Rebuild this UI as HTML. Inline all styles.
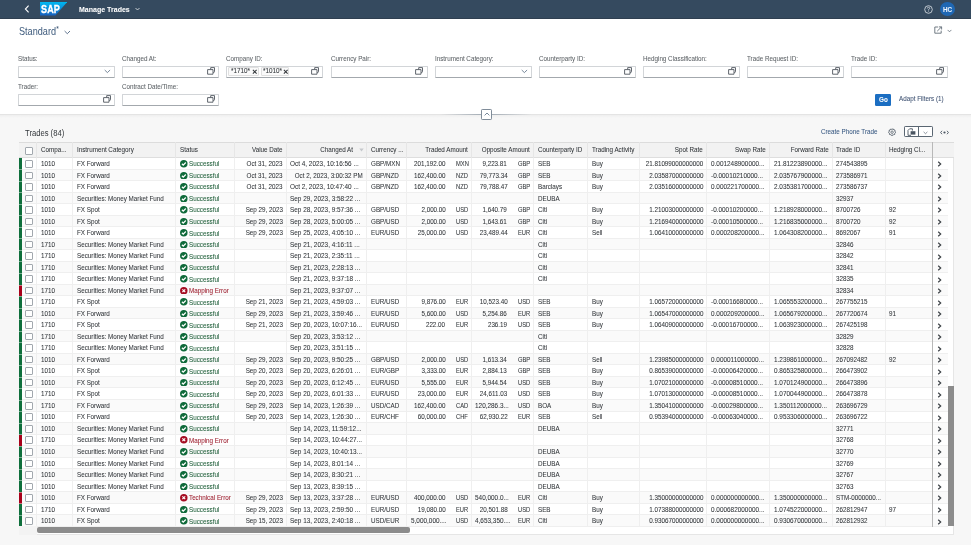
<!DOCTYPE html><html><head><meta charset="utf-8"><style>
*{box-sizing:border-box;margin:0;padding:0}
html,body{width:971px;height:545px;overflow:hidden}
body{position:relative;background:#f7f7f7;will-change:transform;font-family:"Liberation Sans",sans-serif;color:#32363a}
.a{position:absolute}
.t{position:absolute;white-space:nowrap;line-height:8px;color:#32363a;-webkit-text-stroke:0.06px currentColor}
.shell{left:0;top:0;width:971px;height:19px;background:#354a5f;border-bottom:1px solid #2f3f50}
.hdr{left:0;top:19px;width:971px;height:96.4px;background:#fff}
.lbl{color:#5f6468}
.inp{position:absolute;height:12.1px;width:97px;background:#fff;border:0.7px solid #d2d5d8;border-bottom:1px solid #a3a8ad;border-radius:1px}
.vh{position:absolute;width:7px;height:7px}
.cb{position:absolute;width:7.6px;height:7.6px;border:0.7px solid #a2a8ae;border-radius:1px;background:#fff}
.vline{position:absolute;width:0.6px;background:#e6e6e6}
.hline{position:absolute;height:0.6px;background:#e9e9e9}
.succ{color:#22603c}
.err{color:#9c1c2c}
</style></head><body>
<div class="a shell"></div>
<svg class="a" style="left:23px;top:4px" width="8" height="10" viewBox="0 0 8 10"><path d="M5.6 1.6 L2.4 5 L5.6 8.4" fill="none" stroke="#fff" stroke-width="1.1"/></svg>
<svg class="a" style="left:39.9px;top:2.2px" width="27.3" height="13.4" viewBox="0 0 27.3 13.4">
<defs><linearGradient id="g" x1="0" y1="0" x2="0" y2="1"><stop offset="0" stop-color="#00b8f1"/><stop offset="0.5" stop-color="#0a8fdc"/><stop offset="1" stop-color="#1761c0"/></linearGradient></defs>
<path d="M0 0 H27.3 L15.4 13.4 H0 Z" fill="url(#g)"/>
<text x="1.1" y="11.0" font-family="Liberation Sans" font-weight="bold" font-size="11.6" fill="#fff" stroke="#fff" stroke-width="0.35" textLength="18.6" lengthAdjust="spacingAndGlyphs">SAP</text>
</svg>
<span class="t " style="left:78.70px;top:5.86px;font-size:7.9px;transform:scaleX(0.89);transform-origin:0 0;font-weight:bold;color:#fff">Manage Trades</span>
<svg class="a" style="left:135.2px;top:7.0px" width="5" height="4" viewBox="0 0 5 4"><path d="M0.5 1 L2.5 3 L4.5 1" fill="none" stroke="#fff" stroke-width="0.7"/></svg>
<svg class="a" style="left:923.6px;top:4.6px" width="9" height="9" viewBox="0 0 9 9"><circle cx="4.5" cy="4.5" r="3.8" fill="none" stroke="#e8ecf0" stroke-width="0.75"/><path d="M3.3 3.5 Q3.3 2.3 4.5 2.3 Q5.7 2.3 5.7 3.4 Q5.7 4.1 4.5 4.6 V5.5" fill="none" stroke="#e8ecf0" stroke-width="0.7"/><circle cx="4.5" cy="6.6" r="0.45" fill="#e8ecf0"/></svg>
<div class="a" style="left:939.5px;top:1.9px;width:15.2px;height:14.2px;border-radius:50%;background:#1f67b3"></div>
<span class="t " style="left:942.70px;top:5.77px;font-size:7.0px;transform:scaleX(0.9);transform-origin:0 0;font-weight:bold;color:#eaf2fb">HC</span>
<div class="a hdr" style="height:95px"></div>
<span class="t " style="left:18.50px;top:28.07px;font-size:10.2px;-webkit-text-stroke:0;transform:scaleX(0.895);transform-origin:0 0;color:#3d5a7c">Standard</span>
<span class="t " style="left:56.30px;top:24.75px;font-size:6.5px;color:#3b5473">*</span>
<svg class="a" style="left:63.5px;top:30px" width="7" height="5" viewBox="0 0 7 5"><path d="M0.6 1 L3.3 3.7 L6 1" fill="none" stroke="#3b5473" stroke-width="0.8"/></svg>
<svg class="a" style="left:934px;top:25.5px" width="10" height="8" viewBox="0 0 10 8"><path d="M4.2 1 H0.8 V7.2 H7.2 V4.6" fill="none" stroke="#5a6570" stroke-width="0.85"/><path d="M3.2 5.2 L7.4 1 M5 0.9 H7.6 V3.5" fill="none" stroke="#5a6570" stroke-width="0.85"/></svg>
<svg class="a" style="left:947px;top:28.6px" width="5" height="4" viewBox="0 0 5 4"><path d="M0.6 0.9 L2.5 2.8 L4.4 0.9" fill="none" stroke="#5a6570" stroke-width="0.75"/></svg>
<span class="t lbl" style="left:18.10px;top:54.51px;font-size:6.9px;transform:scaleX(0.91);transform-origin:0 0;">Status:</span>
<div class="inp" style="left:18.10px;top:65.60px"></div>
<svg class="a" style="left:104.10px;top:69.00px" width="7" height="5" viewBox="0 0 7 5"><path d="M0.7 1 L3.4 3.6 L6.1 1" fill="none" stroke="#556b82" stroke-width="0.8"/></svg>
<span class="t lbl" style="left:122.25px;top:54.51px;font-size:6.9px;transform:scaleX(0.91);transform-origin:0 0;">Changed At:</span>
<div class="inp" style="left:122.25px;top:65.60px"></div>
<svg class="a" style="left:207.05px;top:67.30px" width="8" height="8" viewBox="0 0 8 8"><path d="M3.7 2.6 V0.6 H7.5 V4.6 Q7.5 5.4 6.7 5.4 H6" fill="none" stroke="#4f565d" stroke-width="0.9"/><path d="M0.6 2.6 H6 V7.2 H0.6 Z" fill="#fff" stroke="#4f565d" stroke-width="0.9"/></svg>
<span class="t lbl" style="left:226.40px;top:54.51px;font-size:6.9px;transform:scaleX(0.91);transform-origin:0 0;">Company ID:</span>
<div class="inp" style="left:226.40px;top:65.60px"></div>
<svg class="a" style="left:311.20px;top:67.30px" width="8" height="8" viewBox="0 0 8 8"><path d="M3.7 2.6 V0.6 H7.5 V4.6 Q7.5 5.4 6.7 5.4 H6" fill="none" stroke="#4f565d" stroke-width="0.9"/><path d="M0.6 2.6 H6 V7.2 H0.6 Z" fill="#fff" stroke="#4f565d" stroke-width="0.9"/></svg>
<div class="a" style="left:228.30px;top:66.60px;width:30.30px;height:9.9px;background:#fafafa;border:0.6px solid #e0e0e0;border-radius:1px"></div>
<span class="t " style="left:231.20px;top:67.41px;font-size:6.9px;transform:scaleX(0.92);transform-origin:0 0;">*1710*</span>
<svg class="a" style="left:251.90px;top:68.60px" width="5.5" height="5.5" viewBox="0 0 5 5"><path d="M0.8 0.8 L4.2 4.2 M4.2 0.8 L0.8 4.2" stroke="#32363a" stroke-width="0.95"/></svg>
<div class="a" style="left:261.00px;top:66.60px;width:28.40px;height:9.9px;background:#fafafa;border:0.6px solid #e0e0e0;border-radius:1px"></div>
<span class="t " style="left:262.60px;top:67.41px;font-size:6.9px;transform:scaleX(0.92);transform-origin:0 0;">*1010*</span>
<svg class="a" style="left:283.00px;top:68.60px" width="5.5" height="5.5" viewBox="0 0 5 5"><path d="M0.8 0.8 L4.2 4.2 M4.2 0.8 L0.8 4.2" stroke="#32363a" stroke-width="0.95"/></svg>
<span class="t lbl" style="left:330.55px;top:54.51px;font-size:6.9px;transform:scaleX(0.91);transform-origin:0 0;">Currency Pair:</span>
<div class="inp" style="left:330.55px;top:65.60px"></div>
<svg class="a" style="left:415.35px;top:67.30px" width="8" height="8" viewBox="0 0 8 8"><path d="M3.7 2.6 V0.6 H7.5 V4.6 Q7.5 5.4 6.7 5.4 H6" fill="none" stroke="#4f565d" stroke-width="0.9"/><path d="M0.6 2.6 H6 V7.2 H0.6 Z" fill="#fff" stroke="#4f565d" stroke-width="0.9"/></svg>
<span class="t lbl" style="left:434.70px;top:54.51px;font-size:6.9px;transform:scaleX(0.91);transform-origin:0 0;">Instrument Category:</span>
<div class="inp" style="left:434.70px;top:65.60px"></div>
<svg class="a" style="left:520.70px;top:69.00px" width="7" height="5" viewBox="0 0 7 5"><path d="M0.7 1 L3.4 3.6 L6.1 1" fill="none" stroke="#556b82" stroke-width="0.8"/></svg>
<span class="t lbl" style="left:538.85px;top:54.51px;font-size:6.9px;transform:scaleX(0.91);transform-origin:0 0;">Counterparty ID:</span>
<div class="inp" style="left:538.85px;top:65.60px"></div>
<svg class="a" style="left:623.65px;top:67.30px" width="8" height="8" viewBox="0 0 8 8"><path d="M3.7 2.6 V0.6 H7.5 V4.6 Q7.5 5.4 6.7 5.4 H6" fill="none" stroke="#4f565d" stroke-width="0.9"/><path d="M0.6 2.6 H6 V7.2 H0.6 Z" fill="#fff" stroke="#4f565d" stroke-width="0.9"/></svg>
<span class="t lbl" style="left:643.00px;top:54.51px;font-size:6.9px;transform:scaleX(0.91);transform-origin:0 0;">Hedging Classification:</span>
<div class="inp" style="left:643.00px;top:65.60px"></div>
<svg class="a" style="left:727.80px;top:67.30px" width="8" height="8" viewBox="0 0 8 8"><path d="M3.7 2.6 V0.6 H7.5 V4.6 Q7.5 5.4 6.7 5.4 H6" fill="none" stroke="#4f565d" stroke-width="0.9"/><path d="M0.6 2.6 H6 V7.2 H0.6 Z" fill="#fff" stroke="#4f565d" stroke-width="0.9"/></svg>
<span class="t lbl" style="left:747.15px;top:54.51px;font-size:6.9px;transform:scaleX(0.91);transform-origin:0 0;">Trade Request ID:</span>
<div class="inp" style="left:747.15px;top:65.60px"></div>
<svg class="a" style="left:831.95px;top:67.30px" width="8" height="8" viewBox="0 0 8 8"><path d="M3.7 2.6 V0.6 H7.5 V4.6 Q7.5 5.4 6.7 5.4 H6" fill="none" stroke="#4f565d" stroke-width="0.9"/><path d="M0.6 2.6 H6 V7.2 H0.6 Z" fill="#fff" stroke="#4f565d" stroke-width="0.9"/></svg>
<span class="t lbl" style="left:851.30px;top:54.51px;font-size:6.9px;transform:scaleX(0.91);transform-origin:0 0;">Trade ID:</span>
<div class="inp" style="left:851.30px;top:65.60px"></div>
<svg class="a" style="left:936.10px;top:67.30px" width="8" height="8" viewBox="0 0 8 8"><path d="M3.7 2.6 V0.6 H7.5 V4.6 Q7.5 5.4 6.7 5.4 H6" fill="none" stroke="#4f565d" stroke-width="0.9"/><path d="M0.6 2.6 H6 V7.2 H0.6 Z" fill="#fff" stroke="#4f565d" stroke-width="0.9"/></svg>
<span class="t lbl" style="left:18.10px;top:82.51px;font-size:6.9px;transform:scaleX(0.91);transform-origin:0 0;">Trader:</span>
<div class="inp" style="left:18.10px;top:93.50px"></div>
<svg class="a" style="left:102.90px;top:95.20px" width="8" height="8" viewBox="0 0 8 8"><path d="M3.7 2.6 V0.6 H7.5 V4.6 Q7.5 5.4 6.7 5.4 H6" fill="none" stroke="#4f565d" stroke-width="0.9"/><path d="M0.6 2.6 H6 V7.2 H0.6 Z" fill="#fff" stroke="#4f565d" stroke-width="0.9"/></svg>
<span class="t lbl" style="left:122.25px;top:82.51px;font-size:6.9px;transform:scaleX(0.91);transform-origin:0 0;">Contract Date/Time:</span>
<div class="inp" style="left:122.25px;top:93.50px"></div>
<svg class="a" style="left:207.05px;top:95.20px" width="8" height="8" viewBox="0 0 8 8"><path d="M3.7 2.6 V0.6 H7.5 V4.6 Q7.5 5.4 6.7 5.4 H6" fill="none" stroke="#4f565d" stroke-width="0.9"/><path d="M0.6 2.6 H6 V7.2 H0.6 Z" fill="#fff" stroke="#4f565d" stroke-width="0.9"/></svg>
<div class="a" style="left:875.2px;top:94.1px;width:15.8px;height:11.7px;background:#1b6ec2;border-radius:1.2px"></div>
<span class="t " style="left:879.00px;top:95.51px;font-size:6.9px;transform:scaleX(0.92);transform-origin:0 0;font-weight:bold;color:#fff">Go</span>
<span class="t " style="left:899.10px;top:95.41px;font-size:6.9px;transform:scaleX(0.91);transform-origin:0 0;color:#3d5070">Adapt Filters (1)</span>
<div class="a" style="left:0;top:114px;width:971px;height:1px;background:linear-gradient(90deg,#e4e4e4 0px,#e4e4e4 440px,#aab2ba 478px,#aab2ba 495px,#e4e4e4 532px,#e4e4e4 971px)"></div>
<div class="a" style="left:0;top:115px;width:971px;height:3px;background:linear-gradient(#efefef,#f7f7f7)"></div>
<div class="a" style="left:481.2px;top:108.9px;width:11.2px;height:11.3px;background:#fff;border:0.8px solid #7f8c99;border-radius:1.2px"></div>
<svg class="a" style="left:483.8px;top:112px" width="6" height="5" viewBox="0 0 6 5"><path d="M0.6 3.4 L3 1 L5.4 3.4" fill="none" stroke="#556b82" stroke-width="0.8"/></svg>
<span class="t " style="left:24.70px;top:128.72px;font-size:8.3px;-webkit-text-stroke:0;transform:scaleX(0.92);transform-origin:0 0;">Trades (84)</span>
<span class="t " style="left:821.00px;top:127.61px;font-size:6.9px;transform:scaleX(0.91);transform-origin:0 0;color:#3a5a82">Create Phone Trade</span>
<svg class="a" style="left:888.4px;top:127.8px" width="8.2" height="8.4" viewBox="0 0 10 10"><path d="M5 0.9 L6 1.6 L7.3 1.4 L7.7 2.6 L8.9 3.2 L8.6 4.4 L9.2 5.5 L8.3 6.4 L8.2 7.7 L6.9 7.9 L6.1 8.9 L5 8.5 L3.9 8.9 L3.1 7.9 L1.8 7.7 L1.7 6.4 L0.8 5.5 L1.4 4.4 L1.1 3.2 L2.3 2.6 L2.7 1.4 L4 1.6 Z" fill="none" stroke="#5b6570" stroke-width="1.2"/><circle cx="5" cy="5" r="1.5" fill="none" stroke="#5b6570" stroke-width="1"/></svg>
<div class="a" style="left:903.5px;top:126.4px;width:29px;height:11.1px;border:0.8px solid #5a6672;border-radius:1.2px;background:#fff"></div>
<div class="a" style="left:917.9px;top:126.6px;width:0.8px;height:10.7px;background:#5a6672"></div>
<svg class="a" style="left:906.6px;top:128.2px" width="9" height="8" viewBox="0 0 9 8"><path d="M1 2.4 L2.6 0.8 H5.4 V2.6 M1 2.4 V7.3 H4" fill="none" stroke="#4a5561" stroke-width="0.9"/><rect x="3.6" y="3.2" width="4.8" height="3.4" fill="#4a5561"/></svg>
<svg class="a" style="left:923px;top:130.8px" width="5" height="4" viewBox="0 0 5 4"><path d="M0.6 0.9 L2.5 2.7 L4.4 0.9" fill="none" stroke="#5a6672" stroke-width="0.7"/></svg>
<svg class="a" style="left:939.6px;top:130.4px" width="9" height="5" viewBox="0 0 9 5"><path d="M2 0.8 L0.6 2.5 L2 4.2 M7 0.8 L8.4 2.5 L7 4.2" fill="none" stroke="#4a5561" stroke-width="0.9"/><circle cx="4.5" cy="2.5" r="1.1" fill="#4a5561"/></svg>
<div class="a" style="left:18.5px;top:142.1px;width:935.50px;height:393.10px;background:#fff;border:0.6px solid #e6e6e6"></div>
<div class="a" style="left:18.5px;top:142.1px;width:935.50px;height:16.00px;background:#f2f2f2;border-bottom:0.7px solid #dedede;border-top:0.6px solid #dcdcdc"></div>
<div class="a" style="left:18.5px;top:158.10px;width:929.50px;height:11.52px;background:#ffffff;border-bottom:0.6px solid #efefef"></div>
<div class="a" style="left:18.5px;top:169.62px;width:929.50px;height:11.52px;background:#fafafa;border-bottom:0.6px solid #efefef"></div>
<div class="a" style="left:18.5px;top:181.14px;width:929.50px;height:11.52px;background:#ffffff;border-bottom:0.6px solid #efefef"></div>
<div class="a" style="left:18.5px;top:192.66px;width:929.50px;height:11.52px;background:#fafafa;border-bottom:0.6px solid #efefef"></div>
<div class="a" style="left:18.5px;top:204.18px;width:929.50px;height:11.52px;background:#ffffff;border-bottom:0.6px solid #efefef"></div>
<div class="a" style="left:18.5px;top:215.70px;width:929.50px;height:11.52px;background:#fafafa;border-bottom:0.6px solid #efefef"></div>
<div class="a" style="left:18.5px;top:227.22px;width:929.50px;height:11.52px;background:#ffffff;border-bottom:0.6px solid #efefef"></div>
<div class="a" style="left:18.5px;top:238.74px;width:929.50px;height:11.52px;background:#fafafa;border-bottom:0.6px solid #efefef"></div>
<div class="a" style="left:18.5px;top:250.26px;width:929.50px;height:11.52px;background:#ffffff;border-bottom:0.6px solid #efefef"></div>
<div class="a" style="left:18.5px;top:261.78px;width:929.50px;height:11.52px;background:#fafafa;border-bottom:0.6px solid #efefef"></div>
<div class="a" style="left:18.5px;top:273.30px;width:929.50px;height:11.52px;background:#ffffff;border-bottom:0.6px solid #efefef"></div>
<div class="a" style="left:18.5px;top:284.82px;width:929.50px;height:11.52px;background:#fafafa;border-bottom:0.6px solid #efefef"></div>
<div class="a" style="left:18.5px;top:296.34px;width:929.50px;height:11.52px;background:#ffffff;border-bottom:0.6px solid #efefef"></div>
<div class="a" style="left:18.5px;top:307.86px;width:929.50px;height:11.52px;background:#fafafa;border-bottom:0.6px solid #efefef"></div>
<div class="a" style="left:18.5px;top:319.38px;width:929.50px;height:11.52px;background:#ffffff;border-bottom:0.6px solid #efefef"></div>
<div class="a" style="left:18.5px;top:330.90px;width:929.50px;height:11.52px;background:#fafafa;border-bottom:0.6px solid #efefef"></div>
<div class="a" style="left:18.5px;top:342.42px;width:929.50px;height:11.52px;background:#ffffff;border-bottom:0.6px solid #efefef"></div>
<div class="a" style="left:18.5px;top:353.94px;width:929.50px;height:11.52px;background:#fafafa;border-bottom:0.6px solid #efefef"></div>
<div class="a" style="left:18.5px;top:365.46px;width:929.50px;height:11.52px;background:#ffffff;border-bottom:0.6px solid #efefef"></div>
<div class="a" style="left:18.5px;top:376.98px;width:929.50px;height:11.52px;background:#fafafa;border-bottom:0.6px solid #efefef"></div>
<div class="a" style="left:18.5px;top:388.50px;width:929.50px;height:11.52px;background:#ffffff;border-bottom:0.6px solid #efefef"></div>
<div class="a" style="left:18.5px;top:400.02px;width:929.50px;height:11.52px;background:#fafafa;border-bottom:0.6px solid #efefef"></div>
<div class="a" style="left:18.5px;top:411.54px;width:929.50px;height:11.52px;background:#ffffff;border-bottom:0.6px solid #efefef"></div>
<div class="a" style="left:18.5px;top:423.06px;width:929.50px;height:11.52px;background:#fafafa;border-bottom:0.6px solid #efefef"></div>
<div class="a" style="left:18.5px;top:434.58px;width:929.50px;height:11.52px;background:#ffffff;border-bottom:0.6px solid #efefef"></div>
<div class="a" style="left:18.5px;top:446.10px;width:929.50px;height:11.52px;background:#fafafa;border-bottom:0.6px solid #efefef"></div>
<div class="a" style="left:18.5px;top:457.62px;width:929.50px;height:11.52px;background:#ffffff;border-bottom:0.6px solid #efefef"></div>
<div class="a" style="left:18.5px;top:469.14px;width:929.50px;height:11.52px;background:#fafafa;border-bottom:0.6px solid #efefef"></div>
<div class="a" style="left:18.5px;top:480.66px;width:929.50px;height:11.52px;background:#ffffff;border-bottom:0.6px solid #efefef"></div>
<div class="a" style="left:18.5px;top:492.18px;width:929.50px;height:11.52px;background:#fafafa;border-bottom:0.6px solid #efefef"></div>
<div class="a" style="left:18.5px;top:503.70px;width:929.50px;height:11.52px;background:#ffffff;border-bottom:0.6px solid #efefef"></div>
<div class="a" style="left:18.5px;top:515.22px;width:929.50px;height:11.52px;background:#fafafa;border-bottom:0.6px solid #efefef"></div>
<div class="vline" style="left:36.40px;top:142.10px;height:384.64px;background:#efefef"></div>
<div class="vline" style="left:36.40px;top:142.10px;height:16.00px;background:#e6e6e6"></div>
<div class="vline" style="left:72.40px;top:142.10px;height:384.64px;background:#efefef"></div>
<div class="vline" style="left:72.40px;top:142.10px;height:16.00px;background:#e6e6e6"></div>
<div class="vline" style="left:175.10px;top:142.10px;height:384.64px;background:#efefef"></div>
<div class="vline" style="left:175.10px;top:142.10px;height:16.00px;background:#e6e6e6"></div>
<div class="vline" style="left:233.70px;top:142.10px;height:384.64px;background:#efefef"></div>
<div class="vline" style="left:233.70px;top:142.10px;height:16.00px;background:#e6e6e6"></div>
<div class="vline" style="left:285.80px;top:142.10px;height:384.64px;background:#efefef"></div>
<div class="vline" style="left:285.80px;top:142.10px;height:16.00px;background:#e6e6e6"></div>
<div class="vline" style="left:366.00px;top:142.10px;height:384.64px;background:#efefef"></div>
<div class="vline" style="left:366.00px;top:142.10px;height:16.00px;background:#e6e6e6"></div>
<div class="vline" style="left:406.30px;top:142.10px;height:384.64px;background:#efefef"></div>
<div class="vline" style="left:406.30px;top:142.10px;height:16.00px;background:#e6e6e6"></div>
<div class="vline" style="left:470.90px;top:142.10px;height:384.64px;background:#efefef"></div>
<div class="vline" style="left:470.90px;top:142.10px;height:16.00px;background:#e6e6e6"></div>
<div class="vline" style="left:533.00px;top:142.10px;height:384.64px;background:#efefef"></div>
<div class="vline" style="left:533.00px;top:142.10px;height:16.00px;background:#e6e6e6"></div>
<div class="vline" style="left:587.00px;top:142.10px;height:384.64px;background:#efefef"></div>
<div class="vline" style="left:587.00px;top:142.10px;height:16.00px;background:#e6e6e6"></div>
<div class="vline" style="left:638.70px;top:142.10px;height:384.64px;background:#efefef"></div>
<div class="vline" style="left:638.70px;top:142.10px;height:16.00px;background:#e6e6e6"></div>
<div class="vline" style="left:706.20px;top:142.10px;height:384.64px;background:#efefef"></div>
<div class="vline" style="left:706.20px;top:142.10px;height:16.00px;background:#e6e6e6"></div>
<div class="vline" style="left:769.30px;top:142.10px;height:384.64px;background:#efefef"></div>
<div class="vline" style="left:769.30px;top:142.10px;height:16.00px;background:#e6e6e6"></div>
<div class="vline" style="left:831.70px;top:142.10px;height:384.64px;background:#efefef"></div>
<div class="vline" style="left:831.70px;top:142.10px;height:16.00px;background:#e6e6e6"></div>
<div class="vline" style="left:884.80px;top:142.10px;height:384.64px;background:#efefef"></div>
<div class="vline" style="left:884.80px;top:142.10px;height:16.00px;background:#e6e6e6"></div>
<div class="vline" style="left:932.20px;top:142.10px;height:384.64px;background:#efefef"></div>
<div class="vline" style="left:932.20px;top:142.10px;height:16.00px;background:#e6e6e6"></div>
<div class="a" style="left:932.10px;top:142.10px;width:0.8px;height:384.64px;background:#b8b8b8"></div>
<div class="cb" style="left:25.1px;top:147.00px"></div>
<span class="t " style="left:40.90px;top:146.31px;font-size:6.9px;transform:scaleX(0.91);transform-origin:0 0;">Compa...</span>
<span class="t " style="left:76.90px;top:146.31px;font-size:6.9px;transform:scaleX(0.91);transform-origin:0 0;">Instrument Category</span>
<span class="t " style="left:179.60px;top:146.31px;font-size:6.9px;transform:scaleX(0.91);transform-origin:0 0;">Status</span>
<span class="t " style="right:688.40px;top:146.31px;font-size:6.9px;transform:scaleX(0.91);transform-origin:100% 0;">Value Date</span>
<span class="t " style="right:617.80px;top:146.31px;font-size:6.9px;transform:scaleX(0.91);transform-origin:100% 0;color:#32363a">Changed At</span>
<svg class="a" style="left:358.70px;top:148.30px" width="5" height="4" viewBox="0 0 5 4"><path d="M0.3 0.5 H4.7 L2.5 3.5 Z" fill="#c5c8cc"/></svg>
<span class="t " style="left:370.50px;top:146.31px;font-size:6.9px;transform:scaleX(0.91);transform-origin:0 0;">Currency ...</span>
<span class="t " style="right:503.30px;top:146.31px;font-size:6.9px;transform:scaleX(0.91);transform-origin:100% 0;">Traded Amount</span>
<span class="t " style="right:441.20px;top:146.31px;font-size:6.9px;transform:scaleX(0.91);transform-origin:100% 0;">Opposite Amount</span>
<span class="t " style="left:537.50px;top:146.31px;font-size:6.9px;transform:scaleX(0.91);transform-origin:0 0;">Counterparty ID</span>
<span class="t " style="left:591.50px;top:146.31px;font-size:6.9px;transform:scaleX(0.91);transform-origin:0 0;">Trading Activity</span>
<span class="t " style="right:268.00px;top:146.31px;font-size:6.9px;transform:scaleX(0.91);transform-origin:100% 0;">Spot Rate</span>
<span class="t " style="right:204.90px;top:146.31px;font-size:6.9px;transform:scaleX(0.91);transform-origin:100% 0;">Swap Rate</span>
<span class="t " style="right:142.50px;top:146.31px;font-size:6.9px;transform:scaleX(0.91);transform-origin:100% 0;">Forward Rate</span>
<span class="t " style="left:836.20px;top:146.31px;font-size:6.9px;transform:scaleX(0.91);transform-origin:0 0;">Trade ID</span>
<span class="t " style="left:889.30px;top:146.31px;font-size:6.9px;transform:scaleX(0.91);transform-origin:0 0;">Hedging Cl...</span>
<div class="cb" style="left:25.1px;top:160.00px"></div>
<span class="t " style="left:40.90px;top:160.01px;font-size:6.9px;transform:scaleX(0.91);transform-origin:0 0;">1010</span>
<span class="t " style="left:76.90px;top:160.01px;font-size:6.9px;transform:scaleX(0.91);transform-origin:0 0;">FX Forward</span>
<svg class="a" style="left:180.00px;top:160.00px" width="7.6" height="7.6" viewBox="0 0 8 8"><circle cx="4" cy="4" r="3.95" fill="#0f6a3a"/><path d="M2.0 4.0 L3.4 5.4 L6.1 2.6" fill="none" stroke="#fff" stroke-width="1.3"/></svg>
<span class="t succ" style="left:189.40px;top:160.41px;font-size:6.9px;transform:scaleX(0.91);transform-origin:0 0;">Successful</span>
<span class="t " style="right:688.40px;top:160.01px;font-size:6.9px;transform:scaleX(0.91);transform-origin:100% 0;">Oct 31, 2023</span>
<span class="t " style="left:290.30px;top:160.01px;font-size:6.9px;transform:scaleX(0.93);transform-origin:0 0;">Oct 4, 2023, 10:16:56 ...</span>
<span class="t " style="left:370.50px;top:160.01px;font-size:6.9px;transform:scaleX(0.91);transform-origin:0 0;">GBP/MXN</span>
<span class="t " style="right:525.50px;top:160.01px;font-size:6.9px;transform:scaleX(0.91);transform-origin:100% 0;">201,192.00</span>
<span class="t " style="left:456.00px;top:160.01px;font-size:6.9px;transform:scaleX(0.84);transform-origin:0 0;">MXN</span>
<span class="t " style="right:463.70px;top:160.01px;font-size:6.9px;transform:scaleX(0.91);transform-origin:100% 0;">9,223.81</span>
<span class="t " style="left:517.90px;top:160.01px;font-size:6.9px;transform:scaleX(0.84);transform-origin:0 0;">GBP</span>
<span class="t " style="left:537.50px;top:160.01px;font-size:6.9px;transform:scaleX(0.91);transform-origin:0 0;">SEB</span>
<span class="t " style="left:591.50px;top:160.01px;font-size:6.9px;transform:scaleX(0.91);transform-origin:0 0;">Buy</span>
<span class="t " style="right:268.00px;top:160.01px;font-size:6.9px;transform:scaleX(0.91);transform-origin:100% 0;">21.81099000000000</span>
<span class="t " style="left:710.70px;top:160.01px;font-size:6.9px;transform:scaleX(0.93);transform-origin:0 0;">0.001248900000...</span>
<span class="t " style="left:773.80px;top:160.01px;font-size:6.9px;transform:scaleX(0.93);transform-origin:0 0;">21.81223890000...</span>
<span class="t " style="left:836.20px;top:160.01px;font-size:6.9px;transform:scaleX(0.91);transform-origin:0 0;">274543895</span>
<svg class="a" style="left:936.6px;top:161.40px" width="5" height="6" viewBox="0 0 5 6"><path d="M1.2 0.8 L3.7 3 L1.2 5.2" fill="none" stroke="#3a3f44" stroke-width="1.15"/></svg>
<div class="cb" style="left:25.1px;top:171.52px"></div>
<span class="t " style="left:40.90px;top:171.53px;font-size:6.9px;transform:scaleX(0.91);transform-origin:0 0;">1010</span>
<span class="t " style="left:76.90px;top:171.53px;font-size:6.9px;transform:scaleX(0.91);transform-origin:0 0;">FX Forward</span>
<svg class="a" style="left:180.00px;top:171.52px" width="7.6" height="7.6" viewBox="0 0 8 8"><circle cx="4" cy="4" r="3.95" fill="#0f6a3a"/><path d="M2.0 4.0 L3.4 5.4 L6.1 2.6" fill="none" stroke="#fff" stroke-width="1.3"/></svg>
<span class="t succ" style="left:189.40px;top:171.93px;font-size:6.9px;transform:scaleX(0.91);transform-origin:0 0;">Successful</span>
<span class="t " style="right:688.40px;top:171.53px;font-size:6.9px;transform:scaleX(0.91);transform-origin:100% 0;">Oct 31, 2023</span>
<span class="t " style="right:608.20px;top:171.53px;font-size:6.9px;transform:scaleX(0.91);transform-origin:100% 0;">Oct 2, 2023, 3:00:32 PM</span>
<span class="t " style="left:370.50px;top:171.53px;font-size:6.9px;transform:scaleX(0.91);transform-origin:0 0;">GBP/NZD</span>
<span class="t " style="right:525.50px;top:171.53px;font-size:6.9px;transform:scaleX(0.91);transform-origin:100% 0;">162,400.00</span>
<span class="t " style="left:456.00px;top:171.53px;font-size:6.9px;transform:scaleX(0.84);transform-origin:0 0;">NZD</span>
<span class="t " style="right:463.70px;top:171.53px;font-size:6.9px;transform:scaleX(0.91);transform-origin:100% 0;">79,773.34</span>
<span class="t " style="left:517.90px;top:171.53px;font-size:6.9px;transform:scaleX(0.84);transform-origin:0 0;">GBP</span>
<span class="t " style="left:537.50px;top:171.53px;font-size:6.9px;transform:scaleX(0.91);transform-origin:0 0;">SEB</span>
<span class="t " style="left:591.50px;top:171.53px;font-size:6.9px;transform:scaleX(0.91);transform-origin:0 0;">Buy</span>
<span class="t " style="right:268.00px;top:171.53px;font-size:6.9px;transform:scaleX(0.91);transform-origin:100% 0;">2.03587000000000</span>
<span class="t " style="left:710.70px;top:171.53px;font-size:6.9px;transform:scaleX(0.93);transform-origin:0 0;">-0.00010210000...</span>
<span class="t " style="left:773.80px;top:171.53px;font-size:6.9px;transform:scaleX(0.93);transform-origin:0 0;">2.035767900000...</span>
<span class="t " style="left:836.20px;top:171.53px;font-size:6.9px;transform:scaleX(0.91);transform-origin:0 0;">273586971</span>
<svg class="a" style="left:936.6px;top:172.92px" width="5" height="6" viewBox="0 0 5 6"><path d="M1.2 0.8 L3.7 3 L1.2 5.2" fill="none" stroke="#3a3f44" stroke-width="1.15"/></svg>
<div class="cb" style="left:25.1px;top:183.04px"></div>
<span class="t " style="left:40.90px;top:183.05px;font-size:6.9px;transform:scaleX(0.91);transform-origin:0 0;">1010</span>
<span class="t " style="left:76.90px;top:183.05px;font-size:6.9px;transform:scaleX(0.91);transform-origin:0 0;">FX Forward</span>
<svg class="a" style="left:180.00px;top:183.04px" width="7.6" height="7.6" viewBox="0 0 8 8"><circle cx="4" cy="4" r="3.95" fill="#0f6a3a"/><path d="M2.0 4.0 L3.4 5.4 L6.1 2.6" fill="none" stroke="#fff" stroke-width="1.3"/></svg>
<span class="t succ" style="left:189.40px;top:183.45px;font-size:6.9px;transform:scaleX(0.91);transform-origin:0 0;">Successful</span>
<span class="t " style="right:688.40px;top:183.05px;font-size:6.9px;transform:scaleX(0.91);transform-origin:100% 0;">Oct 31, 2023</span>
<span class="t " style="left:290.30px;top:183.05px;font-size:6.9px;transform:scaleX(0.93);transform-origin:0 0;">Oct 2, 2023, 10:47:40 ...</span>
<span class="t " style="left:370.50px;top:183.05px;font-size:6.9px;transform:scaleX(0.91);transform-origin:0 0;">GBP/NZD</span>
<span class="t " style="right:525.50px;top:183.05px;font-size:6.9px;transform:scaleX(0.91);transform-origin:100% 0;">162,400.00</span>
<span class="t " style="left:456.00px;top:183.05px;font-size:6.9px;transform:scaleX(0.84);transform-origin:0 0;">NZD</span>
<span class="t " style="right:463.70px;top:183.05px;font-size:6.9px;transform:scaleX(0.91);transform-origin:100% 0;">79,788.47</span>
<span class="t " style="left:517.90px;top:183.05px;font-size:6.9px;transform:scaleX(0.84);transform-origin:0 0;">GBP</span>
<span class="t " style="left:537.50px;top:183.05px;font-size:6.9px;transform:scaleX(0.91);transform-origin:0 0;">Barclays</span>
<span class="t " style="left:591.50px;top:183.05px;font-size:6.9px;transform:scaleX(0.91);transform-origin:0 0;">Buy</span>
<span class="t " style="right:268.00px;top:183.05px;font-size:6.9px;transform:scaleX(0.91);transform-origin:100% 0;">2.03516000000000</span>
<span class="t " style="left:710.70px;top:183.05px;font-size:6.9px;transform:scaleX(0.93);transform-origin:0 0;">0.000221700000...</span>
<span class="t " style="left:773.80px;top:183.05px;font-size:6.9px;transform:scaleX(0.93);transform-origin:0 0;">2.035381700000...</span>
<span class="t " style="left:836.20px;top:183.05px;font-size:6.9px;transform:scaleX(0.91);transform-origin:0 0;">273586737</span>
<svg class="a" style="left:936.6px;top:184.44px" width="5" height="6" viewBox="0 0 5 6"><path d="M1.2 0.8 L3.7 3 L1.2 5.2" fill="none" stroke="#3a3f44" stroke-width="1.15"/></svg>
<div class="cb" style="left:25.1px;top:194.56px"></div>
<span class="t " style="left:40.90px;top:194.57px;font-size:6.9px;transform:scaleX(0.91);transform-origin:0 0;">1010</span>
<span class="t " style="left:76.90px;top:194.57px;font-size:6.9px;transform:scaleX(0.91);transform-origin:0 0;">Securities: Money Market Fund</span>
<svg class="a" style="left:180.00px;top:194.56px" width="7.6" height="7.6" viewBox="0 0 8 8"><circle cx="4" cy="4" r="3.95" fill="#0f6a3a"/><path d="M2.0 4.0 L3.4 5.4 L6.1 2.6" fill="none" stroke="#fff" stroke-width="1.3"/></svg>
<span class="t succ" style="left:189.40px;top:194.97px;font-size:6.9px;transform:scaleX(0.91);transform-origin:0 0;">Successful</span>
<span class="t " style="left:290.30px;top:194.57px;font-size:6.9px;transform:scaleX(0.93);transform-origin:0 0;">Sep 29, 2023, 3:58:22 ...</span>
<span class="t " style="left:537.50px;top:194.57px;font-size:6.9px;transform:scaleX(0.91);transform-origin:0 0;">DEUBA</span>
<span class="t " style="left:836.20px;top:194.57px;font-size:6.9px;transform:scaleX(0.91);transform-origin:0 0;">32937</span>
<svg class="a" style="left:936.6px;top:195.96px" width="5" height="6" viewBox="0 0 5 6"><path d="M1.2 0.8 L3.7 3 L1.2 5.2" fill="none" stroke="#3a3f44" stroke-width="1.15"/></svg>
<div class="cb" style="left:25.1px;top:206.08px"></div>
<span class="t " style="left:40.90px;top:206.09px;font-size:6.9px;transform:scaleX(0.91);transform-origin:0 0;">1010</span>
<span class="t " style="left:76.90px;top:206.09px;font-size:6.9px;transform:scaleX(0.91);transform-origin:0 0;">FX Spot</span>
<svg class="a" style="left:180.00px;top:206.08px" width="7.6" height="7.6" viewBox="0 0 8 8"><circle cx="4" cy="4" r="3.95" fill="#0f6a3a"/><path d="M2.0 4.0 L3.4 5.4 L6.1 2.6" fill="none" stroke="#fff" stroke-width="1.3"/></svg>
<span class="t succ" style="left:189.40px;top:206.49px;font-size:6.9px;transform:scaleX(0.91);transform-origin:0 0;">Successful</span>
<span class="t " style="right:688.40px;top:206.09px;font-size:6.9px;transform:scaleX(0.91);transform-origin:100% 0;">Sep 29, 2023</span>
<span class="t " style="left:290.30px;top:206.09px;font-size:6.9px;transform:scaleX(0.93);transform-origin:0 0;">Sep 28, 2023, 9:57:36 ...</span>
<span class="t " style="left:370.50px;top:206.09px;font-size:6.9px;transform:scaleX(0.91);transform-origin:0 0;">GBP/USD</span>
<span class="t " style="right:525.50px;top:206.09px;font-size:6.9px;transform:scaleX(0.91);transform-origin:100% 0;">2,000.00</span>
<span class="t " style="left:456.00px;top:206.09px;font-size:6.9px;transform:scaleX(0.84);transform-origin:0 0;">USD</span>
<span class="t " style="right:463.70px;top:206.09px;font-size:6.9px;transform:scaleX(0.91);transform-origin:100% 0;">1,640.79</span>
<span class="t " style="left:517.90px;top:206.09px;font-size:6.9px;transform:scaleX(0.84);transform-origin:0 0;">GBP</span>
<span class="t " style="left:537.50px;top:206.09px;font-size:6.9px;transform:scaleX(0.91);transform-origin:0 0;">Citi</span>
<span class="t " style="left:591.50px;top:206.09px;font-size:6.9px;transform:scaleX(0.91);transform-origin:0 0;">Buy</span>
<span class="t " style="right:268.00px;top:206.09px;font-size:6.9px;transform:scaleX(0.91);transform-origin:100% 0;">1.21003000000000</span>
<span class="t " style="left:710.70px;top:206.09px;font-size:6.9px;transform:scaleX(0.93);transform-origin:0 0;">-0.00010200000...</span>
<span class="t " style="left:773.80px;top:206.09px;font-size:6.9px;transform:scaleX(0.93);transform-origin:0 0;">1.218928000000...</span>
<span class="t " style="left:836.20px;top:206.09px;font-size:6.9px;transform:scaleX(0.91);transform-origin:0 0;">8700726</span>
<span class="t " style="left:889.30px;top:206.09px;font-size:6.9px;transform:scaleX(0.91);transform-origin:0 0;">92</span>
<svg class="a" style="left:936.6px;top:207.48px" width="5" height="6" viewBox="0 0 5 6"><path d="M1.2 0.8 L3.7 3 L1.2 5.2" fill="none" stroke="#3a3f44" stroke-width="1.15"/></svg>
<div class="cb" style="left:25.1px;top:217.60px"></div>
<span class="t " style="left:40.90px;top:217.61px;font-size:6.9px;transform:scaleX(0.91);transform-origin:0 0;">1010</span>
<span class="t " style="left:76.90px;top:217.61px;font-size:6.9px;transform:scaleX(0.91);transform-origin:0 0;">FX Spot</span>
<svg class="a" style="left:180.00px;top:217.60px" width="7.6" height="7.6" viewBox="0 0 8 8"><circle cx="4" cy="4" r="3.95" fill="#0f6a3a"/><path d="M2.0 4.0 L3.4 5.4 L6.1 2.6" fill="none" stroke="#fff" stroke-width="1.3"/></svg>
<span class="t succ" style="left:189.40px;top:218.01px;font-size:6.9px;transform:scaleX(0.91);transform-origin:0 0;">Successful</span>
<span class="t " style="right:688.40px;top:217.61px;font-size:6.9px;transform:scaleX(0.91);transform-origin:100% 0;">Sep 29, 2023</span>
<span class="t " style="left:290.30px;top:217.61px;font-size:6.9px;transform:scaleX(0.93);transform-origin:0 0;">Sep 28, 2023, 5:00:05 ...</span>
<span class="t " style="left:370.50px;top:217.61px;font-size:6.9px;transform:scaleX(0.91);transform-origin:0 0;">GBP/USD</span>
<span class="t " style="right:525.50px;top:217.61px;font-size:6.9px;transform:scaleX(0.91);transform-origin:100% 0;">2,000.00</span>
<span class="t " style="left:456.00px;top:217.61px;font-size:6.9px;transform:scaleX(0.84);transform-origin:0 0;">USD</span>
<span class="t " style="right:463.70px;top:217.61px;font-size:6.9px;transform:scaleX(0.91);transform-origin:100% 0;">1,643.61</span>
<span class="t " style="left:517.90px;top:217.61px;font-size:6.9px;transform:scaleX(0.84);transform-origin:0 0;">GBP</span>
<span class="t " style="left:537.50px;top:217.61px;font-size:6.9px;transform:scaleX(0.91);transform-origin:0 0;">Citi</span>
<span class="t " style="left:591.50px;top:217.61px;font-size:6.9px;transform:scaleX(0.91);transform-origin:0 0;">Buy</span>
<span class="t " style="right:268.00px;top:217.61px;font-size:6.9px;transform:scaleX(0.91);transform-origin:100% 0;">1.21694000000000</span>
<span class="t " style="left:710.70px;top:217.61px;font-size:6.9px;transform:scaleX(0.93);transform-origin:0 0;">-0.00010500000...</span>
<span class="t " style="left:773.80px;top:217.61px;font-size:6.9px;transform:scaleX(0.93);transform-origin:0 0;">1.216835000000...</span>
<span class="t " style="left:836.20px;top:217.61px;font-size:6.9px;transform:scaleX(0.91);transform-origin:0 0;">8700720</span>
<span class="t " style="left:889.30px;top:217.61px;font-size:6.9px;transform:scaleX(0.91);transform-origin:0 0;">92</span>
<svg class="a" style="left:936.6px;top:219.00px" width="5" height="6" viewBox="0 0 5 6"><path d="M1.2 0.8 L3.7 3 L1.2 5.2" fill="none" stroke="#3a3f44" stroke-width="1.15"/></svg>
<div class="cb" style="left:25.1px;top:229.12px"></div>
<span class="t " style="left:40.90px;top:229.13px;font-size:6.9px;transform:scaleX(0.91);transform-origin:0 0;">1010</span>
<span class="t " style="left:76.90px;top:229.13px;font-size:6.9px;transform:scaleX(0.91);transform-origin:0 0;">FX Forward</span>
<svg class="a" style="left:180.00px;top:229.12px" width="7.6" height="7.6" viewBox="0 0 8 8"><circle cx="4" cy="4" r="3.95" fill="#0f6a3a"/><path d="M2.0 4.0 L3.4 5.4 L6.1 2.6" fill="none" stroke="#fff" stroke-width="1.3"/></svg>
<span class="t succ" style="left:189.40px;top:229.53px;font-size:6.9px;transform:scaleX(0.91);transform-origin:0 0;">Successful</span>
<span class="t " style="right:688.40px;top:229.13px;font-size:6.9px;transform:scaleX(0.91);transform-origin:100% 0;">Sep 29, 2023</span>
<span class="t " style="left:290.30px;top:229.13px;font-size:6.9px;transform:scaleX(0.93);transform-origin:0 0;">Sep 25, 2023, 4:05:10 ...</span>
<span class="t " style="left:370.50px;top:229.13px;font-size:6.9px;transform:scaleX(0.91);transform-origin:0 0;">EUR/USD</span>
<span class="t " style="right:525.50px;top:229.13px;font-size:6.9px;transform:scaleX(0.91);transform-origin:100% 0;">25,000.00</span>
<span class="t " style="left:456.00px;top:229.13px;font-size:6.9px;transform:scaleX(0.84);transform-origin:0 0;">USD</span>
<span class="t " style="right:463.70px;top:229.13px;font-size:6.9px;transform:scaleX(0.91);transform-origin:100% 0;">23,489.44</span>
<span class="t " style="left:517.90px;top:229.13px;font-size:6.9px;transform:scaleX(0.84);transform-origin:0 0;">EUR</span>
<span class="t " style="left:537.50px;top:229.13px;font-size:6.9px;transform:scaleX(0.91);transform-origin:0 0;">Citi</span>
<span class="t " style="left:591.50px;top:229.13px;font-size:6.9px;transform:scaleX(0.91);transform-origin:0 0;">Sell</span>
<span class="t " style="right:268.00px;top:229.13px;font-size:6.9px;transform:scaleX(0.91);transform-origin:100% 0;">1.06410000000000</span>
<span class="t " style="left:710.70px;top:229.13px;font-size:6.9px;transform:scaleX(0.93);transform-origin:0 0;">0.000208200000...</span>
<span class="t " style="left:773.80px;top:229.13px;font-size:6.9px;transform:scaleX(0.93);transform-origin:0 0;">1.064308200000...</span>
<span class="t " style="left:836.20px;top:229.13px;font-size:6.9px;transform:scaleX(0.91);transform-origin:0 0;">8692067</span>
<span class="t " style="left:889.30px;top:229.13px;font-size:6.9px;transform:scaleX(0.91);transform-origin:0 0;">91</span>
<svg class="a" style="left:936.6px;top:230.52px" width="5" height="6" viewBox="0 0 5 6"><path d="M1.2 0.8 L3.7 3 L1.2 5.2" fill="none" stroke="#3a3f44" stroke-width="1.15"/></svg>
<div class="cb" style="left:25.1px;top:240.64px"></div>
<span class="t " style="left:40.90px;top:240.65px;font-size:6.9px;transform:scaleX(0.91);transform-origin:0 0;">1710</span>
<span class="t " style="left:76.90px;top:240.65px;font-size:6.9px;transform:scaleX(0.91);transform-origin:0 0;">Securities: Money Market Fund</span>
<svg class="a" style="left:180.00px;top:240.64px" width="7.6" height="7.6" viewBox="0 0 8 8"><circle cx="4" cy="4" r="3.95" fill="#0f6a3a"/><path d="M2.0 4.0 L3.4 5.4 L6.1 2.6" fill="none" stroke="#fff" stroke-width="1.3"/></svg>
<span class="t succ" style="left:189.40px;top:241.05px;font-size:6.9px;transform:scaleX(0.91);transform-origin:0 0;">Successful</span>
<span class="t " style="left:290.30px;top:240.65px;font-size:6.9px;transform:scaleX(0.93);transform-origin:0 0;">Sep 21, 2023, 4:16:11 ...</span>
<span class="t " style="left:537.50px;top:240.65px;font-size:6.9px;transform:scaleX(0.91);transform-origin:0 0;">Citi</span>
<span class="t " style="left:836.20px;top:240.65px;font-size:6.9px;transform:scaleX(0.91);transform-origin:0 0;">32846</span>
<svg class="a" style="left:936.6px;top:242.04px" width="5" height="6" viewBox="0 0 5 6"><path d="M1.2 0.8 L3.7 3 L1.2 5.2" fill="none" stroke="#3a3f44" stroke-width="1.15"/></svg>
<div class="cb" style="left:25.1px;top:252.16px"></div>
<span class="t " style="left:40.90px;top:252.17px;font-size:6.9px;transform:scaleX(0.91);transform-origin:0 0;">1710</span>
<span class="t " style="left:76.90px;top:252.17px;font-size:6.9px;transform:scaleX(0.91);transform-origin:0 0;">Securities: Money Market Fund</span>
<svg class="a" style="left:180.00px;top:252.16px" width="7.6" height="7.6" viewBox="0 0 8 8"><circle cx="4" cy="4" r="3.95" fill="#0f6a3a"/><path d="M2.0 4.0 L3.4 5.4 L6.1 2.6" fill="none" stroke="#fff" stroke-width="1.3"/></svg>
<span class="t succ" style="left:189.40px;top:252.57px;font-size:6.9px;transform:scaleX(0.91);transform-origin:0 0;">Successful</span>
<span class="t " style="left:290.30px;top:252.17px;font-size:6.9px;transform:scaleX(0.93);transform-origin:0 0;">Sep 21, 2023, 2:35:11 ...</span>
<span class="t " style="left:537.50px;top:252.17px;font-size:6.9px;transform:scaleX(0.91);transform-origin:0 0;">Citi</span>
<span class="t " style="left:836.20px;top:252.17px;font-size:6.9px;transform:scaleX(0.91);transform-origin:0 0;">32842</span>
<svg class="a" style="left:936.6px;top:253.56px" width="5" height="6" viewBox="0 0 5 6"><path d="M1.2 0.8 L3.7 3 L1.2 5.2" fill="none" stroke="#3a3f44" stroke-width="1.15"/></svg>
<div class="cb" style="left:25.1px;top:263.68px"></div>
<span class="t " style="left:40.90px;top:263.69px;font-size:6.9px;transform:scaleX(0.91);transform-origin:0 0;">1710</span>
<span class="t " style="left:76.90px;top:263.69px;font-size:6.9px;transform:scaleX(0.91);transform-origin:0 0;">Securities: Money Market Fund</span>
<svg class="a" style="left:180.00px;top:263.68px" width="7.6" height="7.6" viewBox="0 0 8 8"><circle cx="4" cy="4" r="3.95" fill="#0f6a3a"/><path d="M2.0 4.0 L3.4 5.4 L6.1 2.6" fill="none" stroke="#fff" stroke-width="1.3"/></svg>
<span class="t succ" style="left:189.40px;top:264.09px;font-size:6.9px;transform:scaleX(0.91);transform-origin:0 0;">Successful</span>
<span class="t " style="left:290.30px;top:263.69px;font-size:6.9px;transform:scaleX(0.93);transform-origin:0 0;">Sep 21, 2023, 2:28:13 ...</span>
<span class="t " style="left:537.50px;top:263.69px;font-size:6.9px;transform:scaleX(0.91);transform-origin:0 0;">Citi</span>
<span class="t " style="left:836.20px;top:263.69px;font-size:6.9px;transform:scaleX(0.91);transform-origin:0 0;">32841</span>
<svg class="a" style="left:936.6px;top:265.08px" width="5" height="6" viewBox="0 0 5 6"><path d="M1.2 0.8 L3.7 3 L1.2 5.2" fill="none" stroke="#3a3f44" stroke-width="1.15"/></svg>
<div class="cb" style="left:25.1px;top:275.20px"></div>
<span class="t " style="left:40.90px;top:275.21px;font-size:6.9px;transform:scaleX(0.91);transform-origin:0 0;">1710</span>
<span class="t " style="left:76.90px;top:275.21px;font-size:6.9px;transform:scaleX(0.91);transform-origin:0 0;">Securities: Money Market Fund</span>
<svg class="a" style="left:180.00px;top:275.20px" width="7.6" height="7.6" viewBox="0 0 8 8"><circle cx="4" cy="4" r="3.95" fill="#0f6a3a"/><path d="M2.0 4.0 L3.4 5.4 L6.1 2.6" fill="none" stroke="#fff" stroke-width="1.3"/></svg>
<span class="t succ" style="left:189.40px;top:275.61px;font-size:6.9px;transform:scaleX(0.91);transform-origin:0 0;">Successful</span>
<span class="t " style="left:290.30px;top:275.21px;font-size:6.9px;transform:scaleX(0.93);transform-origin:0 0;">Sep 21, 2023, 9:37:18 ...</span>
<span class="t " style="left:537.50px;top:275.21px;font-size:6.9px;transform:scaleX(0.91);transform-origin:0 0;">Citi</span>
<span class="t " style="left:836.20px;top:275.21px;font-size:6.9px;transform:scaleX(0.91);transform-origin:0 0;">32835</span>
<svg class="a" style="left:936.6px;top:276.60px" width="5" height="6" viewBox="0 0 5 6"><path d="M1.2 0.8 L3.7 3 L1.2 5.2" fill="none" stroke="#3a3f44" stroke-width="1.15"/></svg>
<div class="cb" style="left:25.1px;top:286.72px"></div>
<span class="t " style="left:40.90px;top:286.73px;font-size:6.9px;transform:scaleX(0.91);transform-origin:0 0;">1710</span>
<span class="t " style="left:76.90px;top:286.73px;font-size:6.9px;transform:scaleX(0.91);transform-origin:0 0;">Securities: Money Market Fund</span>
<svg class="a" style="left:180.00px;top:286.72px" width="7.6" height="7.6" viewBox="0 0 8 8"><circle cx="4" cy="4" r="3.95" fill="#a50d22"/><path d="M2.5 2.5 L5.5 5.5 M5.5 2.5 L2.5 5.5" fill="none" stroke="#fff" stroke-width="1.2"/></svg>
<span class="t err" style="left:189.40px;top:287.13px;font-size:6.9px;transform:scaleX(0.91);transform-origin:0 0;">Mapping Error</span>
<span class="t " style="left:290.30px;top:286.73px;font-size:6.9px;transform:scaleX(0.93);transform-origin:0 0;">Sep 21, 2023, 9:37:07 ...</span>
<span class="t " style="left:836.20px;top:286.73px;font-size:6.9px;transform:scaleX(0.91);transform-origin:0 0;">32834</span>
<svg class="a" style="left:936.6px;top:288.12px" width="5" height="6" viewBox="0 0 5 6"><path d="M1.2 0.8 L3.7 3 L1.2 5.2" fill="none" stroke="#3a3f44" stroke-width="1.15"/></svg>
<div class="cb" style="left:25.1px;top:298.24px"></div>
<span class="t " style="left:40.90px;top:298.25px;font-size:6.9px;transform:scaleX(0.91);transform-origin:0 0;">1710</span>
<span class="t " style="left:76.90px;top:298.25px;font-size:6.9px;transform:scaleX(0.91);transform-origin:0 0;">FX Spot</span>
<svg class="a" style="left:180.00px;top:298.24px" width="7.6" height="7.6" viewBox="0 0 8 8"><circle cx="4" cy="4" r="3.95" fill="#0f6a3a"/><path d="M2.0 4.0 L3.4 5.4 L6.1 2.6" fill="none" stroke="#fff" stroke-width="1.3"/></svg>
<span class="t succ" style="left:189.40px;top:298.65px;font-size:6.9px;transform:scaleX(0.91);transform-origin:0 0;">Successful</span>
<span class="t " style="right:688.40px;top:298.25px;font-size:6.9px;transform:scaleX(0.91);transform-origin:100% 0;">Sep 21, 2023</span>
<span class="t " style="left:290.30px;top:298.25px;font-size:6.9px;transform:scaleX(0.93);transform-origin:0 0;">Sep 21, 2023, 4:59:03 ...</span>
<span class="t " style="left:370.50px;top:298.25px;font-size:6.9px;transform:scaleX(0.91);transform-origin:0 0;">EUR/USD</span>
<span class="t " style="right:525.50px;top:298.25px;font-size:6.9px;transform:scaleX(0.91);transform-origin:100% 0;">9,876.00</span>
<span class="t " style="left:456.00px;top:298.25px;font-size:6.9px;transform:scaleX(0.84);transform-origin:0 0;">EUR</span>
<span class="t " style="right:463.70px;top:298.25px;font-size:6.9px;transform:scaleX(0.91);transform-origin:100% 0;">10,523.40</span>
<span class="t " style="left:517.90px;top:298.25px;font-size:6.9px;transform:scaleX(0.84);transform-origin:0 0;">USD</span>
<span class="t " style="left:537.50px;top:298.25px;font-size:6.9px;transform:scaleX(0.91);transform-origin:0 0;">SEB</span>
<span class="t " style="left:591.50px;top:298.25px;font-size:6.9px;transform:scaleX(0.91);transform-origin:0 0;">Buy</span>
<span class="t " style="right:268.00px;top:298.25px;font-size:6.9px;transform:scaleX(0.91);transform-origin:100% 0;">1.06572000000000</span>
<span class="t " style="left:710.70px;top:298.25px;font-size:6.9px;transform:scaleX(0.93);transform-origin:0 0;">-0.00016680000...</span>
<span class="t " style="left:773.80px;top:298.25px;font-size:6.9px;transform:scaleX(0.93);transform-origin:0 0;">1.065553200000...</span>
<span class="t " style="left:836.20px;top:298.25px;font-size:6.9px;transform:scaleX(0.91);transform-origin:0 0;">267755215</span>
<svg class="a" style="left:936.6px;top:299.64px" width="5" height="6" viewBox="0 0 5 6"><path d="M1.2 0.8 L3.7 3 L1.2 5.2" fill="none" stroke="#3a3f44" stroke-width="1.15"/></svg>
<div class="cb" style="left:25.1px;top:309.76px"></div>
<span class="t " style="left:40.90px;top:309.77px;font-size:6.9px;transform:scaleX(0.91);transform-origin:0 0;">1010</span>
<span class="t " style="left:76.90px;top:309.77px;font-size:6.9px;transform:scaleX(0.91);transform-origin:0 0;">FX Forward</span>
<svg class="a" style="left:180.00px;top:309.76px" width="7.6" height="7.6" viewBox="0 0 8 8"><circle cx="4" cy="4" r="3.95" fill="#0f6a3a"/><path d="M2.0 4.0 L3.4 5.4 L6.1 2.6" fill="none" stroke="#fff" stroke-width="1.3"/></svg>
<span class="t succ" style="left:189.40px;top:310.17px;font-size:6.9px;transform:scaleX(0.91);transform-origin:0 0;">Successful</span>
<span class="t " style="right:688.40px;top:309.77px;font-size:6.9px;transform:scaleX(0.91);transform-origin:100% 0;">Sep 29, 2023</span>
<span class="t " style="left:290.30px;top:309.77px;font-size:6.9px;transform:scaleX(0.93);transform-origin:0 0;">Sep 21, 2023, 3:59:46 ...</span>
<span class="t " style="left:370.50px;top:309.77px;font-size:6.9px;transform:scaleX(0.91);transform-origin:0 0;">EUR/USD</span>
<span class="t " style="right:525.50px;top:309.77px;font-size:6.9px;transform:scaleX(0.91);transform-origin:100% 0;">5,600.00</span>
<span class="t " style="left:456.00px;top:309.77px;font-size:6.9px;transform:scaleX(0.84);transform-origin:0 0;">USD</span>
<span class="t " style="right:463.70px;top:309.77px;font-size:6.9px;transform:scaleX(0.91);transform-origin:100% 0;">5,254.86</span>
<span class="t " style="left:517.90px;top:309.77px;font-size:6.9px;transform:scaleX(0.84);transform-origin:0 0;">EUR</span>
<span class="t " style="left:537.50px;top:309.77px;font-size:6.9px;transform:scaleX(0.91);transform-origin:0 0;">SEB</span>
<span class="t " style="left:591.50px;top:309.77px;font-size:6.9px;transform:scaleX(0.91);transform-origin:0 0;">Buy</span>
<span class="t " style="right:268.00px;top:309.77px;font-size:6.9px;transform:scaleX(0.91);transform-origin:100% 0;">1.06547000000000</span>
<span class="t " style="left:710.70px;top:309.77px;font-size:6.9px;transform:scaleX(0.93);transform-origin:0 0;">0.000209200000...</span>
<span class="t " style="left:773.80px;top:309.77px;font-size:6.9px;transform:scaleX(0.93);transform-origin:0 0;">1.065679200000...</span>
<span class="t " style="left:836.20px;top:309.77px;font-size:6.9px;transform:scaleX(0.91);transform-origin:0 0;">267720674</span>
<span class="t " style="left:889.30px;top:309.77px;font-size:6.9px;transform:scaleX(0.91);transform-origin:0 0;">91</span>
<svg class="a" style="left:936.6px;top:311.16px" width="5" height="6" viewBox="0 0 5 6"><path d="M1.2 0.8 L3.7 3 L1.2 5.2" fill="none" stroke="#3a3f44" stroke-width="1.15"/></svg>
<div class="cb" style="left:25.1px;top:321.28px"></div>
<span class="t " style="left:40.90px;top:321.29px;font-size:6.9px;transform:scaleX(0.91);transform-origin:0 0;">1710</span>
<span class="t " style="left:76.90px;top:321.29px;font-size:6.9px;transform:scaleX(0.91);transform-origin:0 0;">FX Spot</span>
<svg class="a" style="left:180.00px;top:321.28px" width="7.6" height="7.6" viewBox="0 0 8 8"><circle cx="4" cy="4" r="3.95" fill="#0f6a3a"/><path d="M2.0 4.0 L3.4 5.4 L6.1 2.6" fill="none" stroke="#fff" stroke-width="1.3"/></svg>
<span class="t succ" style="left:189.40px;top:321.69px;font-size:6.9px;transform:scaleX(0.91);transform-origin:0 0;">Successful</span>
<span class="t " style="right:688.40px;top:321.29px;font-size:6.9px;transform:scaleX(0.91);transform-origin:100% 0;">Sep 21, 2023</span>
<span class="t " style="left:290.30px;top:321.29px;font-size:6.9px;transform:scaleX(0.93);transform-origin:0 0;">Sep 20, 2023, 10:07:16...</span>
<span class="t " style="left:370.50px;top:321.29px;font-size:6.9px;transform:scaleX(0.91);transform-origin:0 0;">EUR/USD</span>
<span class="t " style="right:525.50px;top:321.29px;font-size:6.9px;transform:scaleX(0.91);transform-origin:100% 0;">222.00</span>
<span class="t " style="left:456.00px;top:321.29px;font-size:6.9px;transform:scaleX(0.84);transform-origin:0 0;">EUR</span>
<span class="t " style="right:463.70px;top:321.29px;font-size:6.9px;transform:scaleX(0.91);transform-origin:100% 0;">236.19</span>
<span class="t " style="left:517.90px;top:321.29px;font-size:6.9px;transform:scaleX(0.84);transform-origin:0 0;">USD</span>
<span class="t " style="left:537.50px;top:321.29px;font-size:6.9px;transform:scaleX(0.91);transform-origin:0 0;">SEB</span>
<span class="t " style="left:591.50px;top:321.29px;font-size:6.9px;transform:scaleX(0.91);transform-origin:0 0;">Buy</span>
<span class="t " style="right:268.00px;top:321.29px;font-size:6.9px;transform:scaleX(0.91);transform-origin:100% 0;">1.06409000000000</span>
<span class="t " style="left:710.70px;top:321.29px;font-size:6.9px;transform:scaleX(0.93);transform-origin:0 0;">-0.00016700000...</span>
<span class="t " style="left:773.80px;top:321.29px;font-size:6.9px;transform:scaleX(0.93);transform-origin:0 0;">1.063923000000...</span>
<span class="t " style="left:836.20px;top:321.29px;font-size:6.9px;transform:scaleX(0.91);transform-origin:0 0;">267425198</span>
<svg class="a" style="left:936.6px;top:322.68px" width="5" height="6" viewBox="0 0 5 6"><path d="M1.2 0.8 L3.7 3 L1.2 5.2" fill="none" stroke="#3a3f44" stroke-width="1.15"/></svg>
<div class="cb" style="left:25.1px;top:332.80px"></div>
<span class="t " style="left:40.90px;top:332.81px;font-size:6.9px;transform:scaleX(0.91);transform-origin:0 0;">1710</span>
<span class="t " style="left:76.90px;top:332.81px;font-size:6.9px;transform:scaleX(0.91);transform-origin:0 0;">Securities: Money Market Fund</span>
<svg class="a" style="left:180.00px;top:332.80px" width="7.6" height="7.6" viewBox="0 0 8 8"><circle cx="4" cy="4" r="3.95" fill="#0f6a3a"/><path d="M2.0 4.0 L3.4 5.4 L6.1 2.6" fill="none" stroke="#fff" stroke-width="1.3"/></svg>
<span class="t succ" style="left:189.40px;top:333.21px;font-size:6.9px;transform:scaleX(0.91);transform-origin:0 0;">Successful</span>
<span class="t " style="left:290.30px;top:332.81px;font-size:6.9px;transform:scaleX(0.93);transform-origin:0 0;">Sep 20, 2023, 3:53:12 ...</span>
<span class="t " style="left:537.50px;top:332.81px;font-size:6.9px;transform:scaleX(0.91);transform-origin:0 0;">Citi</span>
<span class="t " style="left:836.20px;top:332.81px;font-size:6.9px;transform:scaleX(0.91);transform-origin:0 0;">32829</span>
<svg class="a" style="left:936.6px;top:334.20px" width="5" height="6" viewBox="0 0 5 6"><path d="M1.2 0.8 L3.7 3 L1.2 5.2" fill="none" stroke="#3a3f44" stroke-width="1.15"/></svg>
<div class="cb" style="left:25.1px;top:344.32px"></div>
<span class="t " style="left:40.90px;top:344.33px;font-size:6.9px;transform:scaleX(0.91);transform-origin:0 0;">1710</span>
<span class="t " style="left:76.90px;top:344.33px;font-size:6.9px;transform:scaleX(0.91);transform-origin:0 0;">Securities: Money Market Fund</span>
<svg class="a" style="left:180.00px;top:344.32px" width="7.6" height="7.6" viewBox="0 0 8 8"><circle cx="4" cy="4" r="3.95" fill="#0f6a3a"/><path d="M2.0 4.0 L3.4 5.4 L6.1 2.6" fill="none" stroke="#fff" stroke-width="1.3"/></svg>
<span class="t succ" style="left:189.40px;top:344.73px;font-size:6.9px;transform:scaleX(0.91);transform-origin:0 0;">Successful</span>
<span class="t " style="left:290.30px;top:344.33px;font-size:6.9px;transform:scaleX(0.93);transform-origin:0 0;">Sep 20, 2023, 3:51:15 ...</span>
<span class="t " style="left:537.50px;top:344.33px;font-size:6.9px;transform:scaleX(0.91);transform-origin:0 0;">Citi</span>
<span class="t " style="left:836.20px;top:344.33px;font-size:6.9px;transform:scaleX(0.91);transform-origin:0 0;">32828</span>
<svg class="a" style="left:936.6px;top:345.72px" width="5" height="6" viewBox="0 0 5 6"><path d="M1.2 0.8 L3.7 3 L1.2 5.2" fill="none" stroke="#3a3f44" stroke-width="1.15"/></svg>
<div class="cb" style="left:25.1px;top:355.84px"></div>
<span class="t " style="left:40.90px;top:355.85px;font-size:6.9px;transform:scaleX(0.91);transform-origin:0 0;">1010</span>
<span class="t " style="left:76.90px;top:355.85px;font-size:6.9px;transform:scaleX(0.91);transform-origin:0 0;">FX Forward</span>
<svg class="a" style="left:180.00px;top:355.84px" width="7.6" height="7.6" viewBox="0 0 8 8"><circle cx="4" cy="4" r="3.95" fill="#0f6a3a"/><path d="M2.0 4.0 L3.4 5.4 L6.1 2.6" fill="none" stroke="#fff" stroke-width="1.3"/></svg>
<span class="t succ" style="left:189.40px;top:356.25px;font-size:6.9px;transform:scaleX(0.91);transform-origin:0 0;">Successful</span>
<span class="t " style="right:688.40px;top:355.85px;font-size:6.9px;transform:scaleX(0.91);transform-origin:100% 0;">Sep 29, 2023</span>
<span class="t " style="left:290.30px;top:355.85px;font-size:6.9px;transform:scaleX(0.93);transform-origin:0 0;">Sep 20, 2023, 9:50:25 ...</span>
<span class="t " style="left:370.50px;top:355.85px;font-size:6.9px;transform:scaleX(0.91);transform-origin:0 0;">GBP/USD</span>
<span class="t " style="right:525.50px;top:355.85px;font-size:6.9px;transform:scaleX(0.91);transform-origin:100% 0;">2,000.00</span>
<span class="t " style="left:456.00px;top:355.85px;font-size:6.9px;transform:scaleX(0.84);transform-origin:0 0;">USD</span>
<span class="t " style="right:463.70px;top:355.85px;font-size:6.9px;transform:scaleX(0.91);transform-origin:100% 0;">1,613.34</span>
<span class="t " style="left:517.90px;top:355.85px;font-size:6.9px;transform:scaleX(0.84);transform-origin:0 0;">GBP</span>
<span class="t " style="left:537.50px;top:355.85px;font-size:6.9px;transform:scaleX(0.91);transform-origin:0 0;">SEB</span>
<span class="t " style="left:591.50px;top:355.85px;font-size:6.9px;transform:scaleX(0.91);transform-origin:0 0;">Sell</span>
<span class="t " style="right:268.00px;top:355.85px;font-size:6.9px;transform:scaleX(0.91);transform-origin:100% 0;">1.23985000000000</span>
<span class="t " style="left:710.70px;top:355.85px;font-size:6.9px;transform:scaleX(0.93);transform-origin:0 0;">0.000011000000...</span>
<span class="t " style="left:773.80px;top:355.85px;font-size:6.9px;transform:scaleX(0.93);transform-origin:0 0;">1.239861000000...</span>
<span class="t " style="left:836.20px;top:355.85px;font-size:6.9px;transform:scaleX(0.91);transform-origin:0 0;">267092482</span>
<span class="t " style="left:889.30px;top:355.85px;font-size:6.9px;transform:scaleX(0.91);transform-origin:0 0;">92</span>
<svg class="a" style="left:936.6px;top:357.24px" width="5" height="6" viewBox="0 0 5 6"><path d="M1.2 0.8 L3.7 3 L1.2 5.2" fill="none" stroke="#3a3f44" stroke-width="1.15"/></svg>
<div class="cb" style="left:25.1px;top:367.36px"></div>
<span class="t " style="left:40.90px;top:367.37px;font-size:6.9px;transform:scaleX(0.91);transform-origin:0 0;">1010</span>
<span class="t " style="left:76.90px;top:367.37px;font-size:6.9px;transform:scaleX(0.91);transform-origin:0 0;">FX Spot</span>
<svg class="a" style="left:180.00px;top:367.36px" width="7.6" height="7.6" viewBox="0 0 8 8"><circle cx="4" cy="4" r="3.95" fill="#0f6a3a"/><path d="M2.0 4.0 L3.4 5.4 L6.1 2.6" fill="none" stroke="#fff" stroke-width="1.3"/></svg>
<span class="t succ" style="left:189.40px;top:367.77px;font-size:6.9px;transform:scaleX(0.91);transform-origin:0 0;">Successful</span>
<span class="t " style="right:688.40px;top:367.37px;font-size:6.9px;transform:scaleX(0.91);transform-origin:100% 0;">Sep 20, 2023</span>
<span class="t " style="left:290.30px;top:367.37px;font-size:6.9px;transform:scaleX(0.93);transform-origin:0 0;">Sep 20, 2023, 6:26:01 ...</span>
<span class="t " style="left:370.50px;top:367.37px;font-size:6.9px;transform:scaleX(0.91);transform-origin:0 0;">EUR/GBP</span>
<span class="t " style="right:525.50px;top:367.37px;font-size:6.9px;transform:scaleX(0.91);transform-origin:100% 0;">3,333.00</span>
<span class="t " style="left:456.00px;top:367.37px;font-size:6.9px;transform:scaleX(0.84);transform-origin:0 0;">EUR</span>
<span class="t " style="right:463.70px;top:367.37px;font-size:6.9px;transform:scaleX(0.91);transform-origin:100% 0;">2,884.13</span>
<span class="t " style="left:517.90px;top:367.37px;font-size:6.9px;transform:scaleX(0.84);transform-origin:0 0;">GBP</span>
<span class="t " style="left:537.50px;top:367.37px;font-size:6.9px;transform:scaleX(0.91);transform-origin:0 0;">SEB</span>
<span class="t " style="left:591.50px;top:367.37px;font-size:6.9px;transform:scaleX(0.91);transform-origin:0 0;">Buy</span>
<span class="t " style="right:268.00px;top:367.37px;font-size:6.9px;transform:scaleX(0.91);transform-origin:100% 0;">0.86539000000000</span>
<span class="t " style="left:710.70px;top:367.37px;font-size:6.9px;transform:scaleX(0.93);transform-origin:0 0;">-0.00006420000...</span>
<span class="t " style="left:773.80px;top:367.37px;font-size:6.9px;transform:scaleX(0.93);transform-origin:0 0;">0.865325800000...</span>
<span class="t " style="left:836.20px;top:367.37px;font-size:6.9px;transform:scaleX(0.91);transform-origin:0 0;">266473902</span>
<svg class="a" style="left:936.6px;top:368.76px" width="5" height="6" viewBox="0 0 5 6"><path d="M1.2 0.8 L3.7 3 L1.2 5.2" fill="none" stroke="#3a3f44" stroke-width="1.15"/></svg>
<div class="cb" style="left:25.1px;top:378.88px"></div>
<span class="t " style="left:40.90px;top:378.89px;font-size:6.9px;transform:scaleX(0.91);transform-origin:0 0;">1010</span>
<span class="t " style="left:76.90px;top:378.89px;font-size:6.9px;transform:scaleX(0.91);transform-origin:0 0;">FX Spot</span>
<svg class="a" style="left:180.00px;top:378.88px" width="7.6" height="7.6" viewBox="0 0 8 8"><circle cx="4" cy="4" r="3.95" fill="#0f6a3a"/><path d="M2.0 4.0 L3.4 5.4 L6.1 2.6" fill="none" stroke="#fff" stroke-width="1.3"/></svg>
<span class="t succ" style="left:189.40px;top:379.29px;font-size:6.9px;transform:scaleX(0.91);transform-origin:0 0;">Successful</span>
<span class="t " style="right:688.40px;top:378.89px;font-size:6.9px;transform:scaleX(0.91);transform-origin:100% 0;">Sep 20, 2023</span>
<span class="t " style="left:290.30px;top:378.89px;font-size:6.9px;transform:scaleX(0.93);transform-origin:0 0;">Sep 20, 2023, 6:12:45 ...</span>
<span class="t " style="left:370.50px;top:378.89px;font-size:6.9px;transform:scaleX(0.91);transform-origin:0 0;">EUR/USD</span>
<span class="t " style="right:525.50px;top:378.89px;font-size:6.9px;transform:scaleX(0.91);transform-origin:100% 0;">5,555.00</span>
<span class="t " style="left:456.00px;top:378.89px;font-size:6.9px;transform:scaleX(0.84);transform-origin:0 0;">EUR</span>
<span class="t " style="right:463.70px;top:378.89px;font-size:6.9px;transform:scaleX(0.91);transform-origin:100% 0;">5,944.54</span>
<span class="t " style="left:517.90px;top:378.89px;font-size:6.9px;transform:scaleX(0.84);transform-origin:0 0;">USD</span>
<span class="t " style="left:537.50px;top:378.89px;font-size:6.9px;transform:scaleX(0.91);transform-origin:0 0;">SEB</span>
<span class="t " style="left:591.50px;top:378.89px;font-size:6.9px;transform:scaleX(0.91);transform-origin:0 0;">Buy</span>
<span class="t " style="right:268.00px;top:378.89px;font-size:6.9px;transform:scaleX(0.91);transform-origin:100% 0;">1.07021000000000</span>
<span class="t " style="left:710.70px;top:378.89px;font-size:6.9px;transform:scaleX(0.93);transform-origin:0 0;">-0.00008510000...</span>
<span class="t " style="left:773.80px;top:378.89px;font-size:6.9px;transform:scaleX(0.93);transform-origin:0 0;">1.070124900000...</span>
<span class="t " style="left:836.20px;top:378.89px;font-size:6.9px;transform:scaleX(0.91);transform-origin:0 0;">266473896</span>
<svg class="a" style="left:936.6px;top:380.28px" width="5" height="6" viewBox="0 0 5 6"><path d="M1.2 0.8 L3.7 3 L1.2 5.2" fill="none" stroke="#3a3f44" stroke-width="1.15"/></svg>
<div class="cb" style="left:25.1px;top:390.40px"></div>
<span class="t " style="left:40.90px;top:390.41px;font-size:6.9px;transform:scaleX(0.91);transform-origin:0 0;">1710</span>
<span class="t " style="left:76.90px;top:390.41px;font-size:6.9px;transform:scaleX(0.91);transform-origin:0 0;">FX Spot</span>
<svg class="a" style="left:180.00px;top:390.40px" width="7.6" height="7.6" viewBox="0 0 8 8"><circle cx="4" cy="4" r="3.95" fill="#0f6a3a"/><path d="M2.0 4.0 L3.4 5.4 L6.1 2.6" fill="none" stroke="#fff" stroke-width="1.3"/></svg>
<span class="t succ" style="left:189.40px;top:390.81px;font-size:6.9px;transform:scaleX(0.91);transform-origin:0 0;">Successful</span>
<span class="t " style="right:688.40px;top:390.41px;font-size:6.9px;transform:scaleX(0.91);transform-origin:100% 0;">Sep 20, 2023</span>
<span class="t " style="left:290.30px;top:390.41px;font-size:6.9px;transform:scaleX(0.93);transform-origin:0 0;">Sep 20, 2023, 6:01:33 ...</span>
<span class="t " style="left:370.50px;top:390.41px;font-size:6.9px;transform:scaleX(0.91);transform-origin:0 0;">EUR/USD</span>
<span class="t " style="right:525.50px;top:390.41px;font-size:6.9px;transform:scaleX(0.91);transform-origin:100% 0;">23,000.00</span>
<span class="t " style="left:456.00px;top:390.41px;font-size:6.9px;transform:scaleX(0.84);transform-origin:0 0;">EUR</span>
<span class="t " style="right:463.70px;top:390.41px;font-size:6.9px;transform:scaleX(0.91);transform-origin:100% 0;">24,611.03</span>
<span class="t " style="left:517.90px;top:390.41px;font-size:6.9px;transform:scaleX(0.84);transform-origin:0 0;">USD</span>
<span class="t " style="left:537.50px;top:390.41px;font-size:6.9px;transform:scaleX(0.91);transform-origin:0 0;">SEB</span>
<span class="t " style="left:591.50px;top:390.41px;font-size:6.9px;transform:scaleX(0.91);transform-origin:0 0;">Buy</span>
<span class="t " style="right:268.00px;top:390.41px;font-size:6.9px;transform:scaleX(0.91);transform-origin:100% 0;">1.07013000000000</span>
<span class="t " style="left:710.70px;top:390.41px;font-size:6.9px;transform:scaleX(0.93);transform-origin:0 0;">-0.00008510000...</span>
<span class="t " style="left:773.80px;top:390.41px;font-size:6.9px;transform:scaleX(0.93);transform-origin:0 0;">1.070044900000...</span>
<span class="t " style="left:836.20px;top:390.41px;font-size:6.9px;transform:scaleX(0.91);transform-origin:0 0;">266473878</span>
<svg class="a" style="left:936.6px;top:391.80px" width="5" height="6" viewBox="0 0 5 6"><path d="M1.2 0.8 L3.7 3 L1.2 5.2" fill="none" stroke="#3a3f44" stroke-width="1.15"/></svg>
<div class="cb" style="left:25.1px;top:401.92px"></div>
<span class="t " style="left:40.90px;top:401.93px;font-size:6.9px;transform:scaleX(0.91);transform-origin:0 0;">1710</span>
<span class="t " style="left:76.90px;top:401.93px;font-size:6.9px;transform:scaleX(0.91);transform-origin:0 0;">FX Forward</span>
<svg class="a" style="left:180.00px;top:401.92px" width="7.6" height="7.6" viewBox="0 0 8 8"><circle cx="4" cy="4" r="3.95" fill="#0f6a3a"/><path d="M2.0 4.0 L3.4 5.4 L6.1 2.6" fill="none" stroke="#fff" stroke-width="1.3"/></svg>
<span class="t succ" style="left:189.40px;top:402.33px;font-size:6.9px;transform:scaleX(0.91);transform-origin:0 0;">Successful</span>
<span class="t " style="right:688.40px;top:401.93px;font-size:6.9px;transform:scaleX(0.91);transform-origin:100% 0;">Sep 29, 2023</span>
<span class="t " style="left:290.30px;top:401.93px;font-size:6.9px;transform:scaleX(0.93);transform-origin:0 0;">Sep 14, 2023, 1:26:39 ...</span>
<span class="t " style="left:370.50px;top:401.93px;font-size:6.9px;transform:scaleX(0.91);transform-origin:0 0;">USD/CAD</span>
<span class="t " style="right:525.50px;top:401.93px;font-size:6.9px;transform:scaleX(0.91);transform-origin:100% 0;">162,400.00</span>
<span class="t " style="left:456.00px;top:401.93px;font-size:6.9px;transform:scaleX(0.84);transform-origin:0 0;">CAD</span>
<span class="t " style="left:475.40px;top:401.93px;font-size:6.9px;transform:scaleX(0.93);transform-origin:0 0;">120,286.3...</span>
<span class="t " style="left:517.90px;top:401.93px;font-size:6.9px;transform:scaleX(0.84);transform-origin:0 0;">USD</span>
<span class="t " style="left:537.50px;top:401.93px;font-size:6.9px;transform:scaleX(0.91);transform-origin:0 0;">BOA</span>
<span class="t " style="left:591.50px;top:401.93px;font-size:6.9px;transform:scaleX(0.91);transform-origin:0 0;">Buy</span>
<span class="t " style="right:268.00px;top:401.93px;font-size:6.9px;transform:scaleX(0.91);transform-origin:100% 0;">1.35041000000000</span>
<span class="t " style="left:710.70px;top:401.93px;font-size:6.9px;transform:scaleX(0.93);transform-origin:0 0;">-0.00029800000...</span>
<span class="t " style="left:773.80px;top:401.93px;font-size:6.9px;transform:scaleX(0.93);transform-origin:0 0;">1.350112000000...</span>
<span class="t " style="left:836.20px;top:401.93px;font-size:6.9px;transform:scaleX(0.91);transform-origin:0 0;">263696729</span>
<svg class="a" style="left:936.6px;top:403.32px" width="5" height="6" viewBox="0 0 5 6"><path d="M1.2 0.8 L3.7 3 L1.2 5.2" fill="none" stroke="#3a3f44" stroke-width="1.15"/></svg>
<div class="cb" style="left:25.1px;top:413.44px"></div>
<span class="t " style="left:40.90px;top:413.45px;font-size:6.9px;transform:scaleX(0.91);transform-origin:0 0;">1010</span>
<span class="t " style="left:76.90px;top:413.45px;font-size:6.9px;transform:scaleX(0.91);transform-origin:0 0;">FX Forward</span>
<svg class="a" style="left:180.00px;top:413.44px" width="7.6" height="7.6" viewBox="0 0 8 8"><circle cx="4" cy="4" r="3.95" fill="#0f6a3a"/><path d="M2.0 4.0 L3.4 5.4 L6.1 2.6" fill="none" stroke="#fff" stroke-width="1.3"/></svg>
<span class="t succ" style="left:189.40px;top:413.85px;font-size:6.9px;transform:scaleX(0.91);transform-origin:0 0;">Successful</span>
<span class="t " style="right:688.40px;top:413.45px;font-size:6.9px;transform:scaleX(0.91);transform-origin:100% 0;">Sep 20, 2023</span>
<span class="t " style="left:290.30px;top:413.45px;font-size:6.9px;transform:scaleX(0.93);transform-origin:0 0;">Sep 14, 2023, 1:26:30 ...</span>
<span class="t " style="left:370.50px;top:413.45px;font-size:6.9px;transform:scaleX(0.91);transform-origin:0 0;">EUR/CHF</span>
<span class="t " style="right:525.50px;top:413.45px;font-size:6.9px;transform:scaleX(0.91);transform-origin:100% 0;">60,000.00</span>
<span class="t " style="left:456.00px;top:413.45px;font-size:6.9px;transform:scaleX(0.84);transform-origin:0 0;">CHF</span>
<span class="t " style="right:463.70px;top:413.45px;font-size:6.9px;transform:scaleX(0.91);transform-origin:100% 0;">62,930.22</span>
<span class="t " style="left:517.90px;top:413.45px;font-size:6.9px;transform:scaleX(0.84);transform-origin:0 0;">EUR</span>
<span class="t " style="left:537.50px;top:413.45px;font-size:6.9px;transform:scaleX(0.91);transform-origin:0 0;">SEB</span>
<span class="t " style="left:591.50px;top:413.45px;font-size:6.9px;transform:scaleX(0.91);transform-origin:0 0;">Sell</span>
<span class="t " style="right:268.00px;top:413.45px;font-size:6.9px;transform:scaleX(0.91);transform-origin:100% 0;">0.95394000000000</span>
<span class="t " style="left:710.70px;top:413.45px;font-size:6.9px;transform:scaleX(0.93);transform-origin:0 0;">-0.00063040000...</span>
<span class="t " style="left:773.80px;top:413.45px;font-size:6.9px;transform:scaleX(0.93);transform-origin:0 0;">0.953306000000...</span>
<span class="t " style="left:836.20px;top:413.45px;font-size:6.9px;transform:scaleX(0.91);transform-origin:0 0;">263696722</span>
<svg class="a" style="left:936.6px;top:414.84px" width="5" height="6" viewBox="0 0 5 6"><path d="M1.2 0.8 L3.7 3 L1.2 5.2" fill="none" stroke="#3a3f44" stroke-width="1.15"/></svg>
<div class="cb" style="left:25.1px;top:424.96px"></div>
<span class="t " style="left:40.90px;top:424.97px;font-size:6.9px;transform:scaleX(0.91);transform-origin:0 0;">1010</span>
<span class="t " style="left:76.90px;top:424.97px;font-size:6.9px;transform:scaleX(0.91);transform-origin:0 0;">Securities: Money Market Fund</span>
<svg class="a" style="left:180.00px;top:424.96px" width="7.6" height="7.6" viewBox="0 0 8 8"><circle cx="4" cy="4" r="3.95" fill="#0f6a3a"/><path d="M2.0 4.0 L3.4 5.4 L6.1 2.6" fill="none" stroke="#fff" stroke-width="1.3"/></svg>
<span class="t succ" style="left:189.40px;top:425.37px;font-size:6.9px;transform:scaleX(0.91);transform-origin:0 0;">Successful</span>
<span class="t " style="left:290.30px;top:424.97px;font-size:6.9px;transform:scaleX(0.93);transform-origin:0 0;">Sep 14, 2023, 11:59:12...</span>
<span class="t " style="left:537.50px;top:424.97px;font-size:6.9px;transform:scaleX(0.91);transform-origin:0 0;">DEUBA</span>
<span class="t " style="left:836.20px;top:424.97px;font-size:6.9px;transform:scaleX(0.91);transform-origin:0 0;">32771</span>
<svg class="a" style="left:936.6px;top:426.36px" width="5" height="6" viewBox="0 0 5 6"><path d="M1.2 0.8 L3.7 3 L1.2 5.2" fill="none" stroke="#3a3f44" stroke-width="1.15"/></svg>
<div class="cb" style="left:25.1px;top:436.48px"></div>
<span class="t " style="left:40.90px;top:436.49px;font-size:6.9px;transform:scaleX(0.91);transform-origin:0 0;">1710</span>
<span class="t " style="left:76.90px;top:436.49px;font-size:6.9px;transform:scaleX(0.91);transform-origin:0 0;">Securities: Money Market Fund</span>
<svg class="a" style="left:180.00px;top:436.48px" width="7.6" height="7.6" viewBox="0 0 8 8"><circle cx="4" cy="4" r="3.95" fill="#a50d22"/><path d="M2.5 2.5 L5.5 5.5 M5.5 2.5 L2.5 5.5" fill="none" stroke="#fff" stroke-width="1.2"/></svg>
<span class="t err" style="left:189.40px;top:436.89px;font-size:6.9px;transform:scaleX(0.91);transform-origin:0 0;">Mapping Error</span>
<span class="t " style="left:290.30px;top:436.49px;font-size:6.9px;transform:scaleX(0.93);transform-origin:0 0;">Sep 14, 2023, 10:44:27...</span>
<span class="t " style="left:836.20px;top:436.49px;font-size:6.9px;transform:scaleX(0.91);transform-origin:0 0;">32768</span>
<svg class="a" style="left:936.6px;top:437.88px" width="5" height="6" viewBox="0 0 5 6"><path d="M1.2 0.8 L3.7 3 L1.2 5.2" fill="none" stroke="#3a3f44" stroke-width="1.15"/></svg>
<div class="cb" style="left:25.1px;top:448.00px"></div>
<span class="t " style="left:40.90px;top:448.01px;font-size:6.9px;transform:scaleX(0.91);transform-origin:0 0;">1010</span>
<span class="t " style="left:76.90px;top:448.01px;font-size:6.9px;transform:scaleX(0.91);transform-origin:0 0;">Securities: Money Market Fund</span>
<svg class="a" style="left:180.00px;top:448.00px" width="7.6" height="7.6" viewBox="0 0 8 8"><circle cx="4" cy="4" r="3.95" fill="#0f6a3a"/><path d="M2.0 4.0 L3.4 5.4 L6.1 2.6" fill="none" stroke="#fff" stroke-width="1.3"/></svg>
<span class="t succ" style="left:189.40px;top:448.41px;font-size:6.9px;transform:scaleX(0.91);transform-origin:0 0;">Successful</span>
<span class="t " style="left:290.30px;top:448.01px;font-size:6.9px;transform:scaleX(0.93);transform-origin:0 0;">Sep 14, 2023, 10:40:13...</span>
<span class="t " style="left:537.50px;top:448.01px;font-size:6.9px;transform:scaleX(0.91);transform-origin:0 0;">DEUBA</span>
<span class="t " style="left:836.20px;top:448.01px;font-size:6.9px;transform:scaleX(0.91);transform-origin:0 0;">32770</span>
<svg class="a" style="left:936.6px;top:449.40px" width="5" height="6" viewBox="0 0 5 6"><path d="M1.2 0.8 L3.7 3 L1.2 5.2" fill="none" stroke="#3a3f44" stroke-width="1.15"/></svg>
<div class="cb" style="left:25.1px;top:459.52px"></div>
<span class="t " style="left:40.90px;top:459.53px;font-size:6.9px;transform:scaleX(0.91);transform-origin:0 0;">1010</span>
<span class="t " style="left:76.90px;top:459.53px;font-size:6.9px;transform:scaleX(0.91);transform-origin:0 0;">Securities: Money Market Fund</span>
<svg class="a" style="left:180.00px;top:459.52px" width="7.6" height="7.6" viewBox="0 0 8 8"><circle cx="4" cy="4" r="3.95" fill="#0f6a3a"/><path d="M2.0 4.0 L3.4 5.4 L6.1 2.6" fill="none" stroke="#fff" stroke-width="1.3"/></svg>
<span class="t succ" style="left:189.40px;top:459.93px;font-size:6.9px;transform:scaleX(0.91);transform-origin:0 0;">Successful</span>
<span class="t " style="left:290.30px;top:459.53px;font-size:6.9px;transform:scaleX(0.93);transform-origin:0 0;">Sep 14, 2023, 8:01:14 ...</span>
<span class="t " style="left:537.50px;top:459.53px;font-size:6.9px;transform:scaleX(0.91);transform-origin:0 0;">DEUBA</span>
<span class="t " style="left:836.20px;top:459.53px;font-size:6.9px;transform:scaleX(0.91);transform-origin:0 0;">32769</span>
<svg class="a" style="left:936.6px;top:460.92px" width="5" height="6" viewBox="0 0 5 6"><path d="M1.2 0.8 L3.7 3 L1.2 5.2" fill="none" stroke="#3a3f44" stroke-width="1.15"/></svg>
<div class="cb" style="left:25.1px;top:471.04px"></div>
<span class="t " style="left:40.90px;top:471.05px;font-size:6.9px;transform:scaleX(0.91);transform-origin:0 0;">1010</span>
<span class="t " style="left:76.90px;top:471.05px;font-size:6.9px;transform:scaleX(0.91);transform-origin:0 0;">Securities: Money Market Fund</span>
<svg class="a" style="left:180.00px;top:471.04px" width="7.6" height="7.6" viewBox="0 0 8 8"><circle cx="4" cy="4" r="3.95" fill="#0f6a3a"/><path d="M2.0 4.0 L3.4 5.4 L6.1 2.6" fill="none" stroke="#fff" stroke-width="1.3"/></svg>
<span class="t succ" style="left:189.40px;top:471.45px;font-size:6.9px;transform:scaleX(0.91);transform-origin:0 0;">Successful</span>
<span class="t " style="left:290.30px;top:471.05px;font-size:6.9px;transform:scaleX(0.93);transform-origin:0 0;">Sep 14, 2023, 8:30:21 ...</span>
<span class="t " style="left:537.50px;top:471.05px;font-size:6.9px;transform:scaleX(0.91);transform-origin:0 0;">DEUBA</span>
<span class="t " style="left:836.20px;top:471.05px;font-size:6.9px;transform:scaleX(0.91);transform-origin:0 0;">32767</span>
<svg class="a" style="left:936.6px;top:472.44px" width="5" height="6" viewBox="0 0 5 6"><path d="M1.2 0.8 L3.7 3 L1.2 5.2" fill="none" stroke="#3a3f44" stroke-width="1.15"/></svg>
<div class="cb" style="left:25.1px;top:482.56px"></div>
<span class="t " style="left:40.90px;top:482.57px;font-size:6.9px;transform:scaleX(0.91);transform-origin:0 0;">1010</span>
<span class="t " style="left:76.90px;top:482.57px;font-size:6.9px;transform:scaleX(0.91);transform-origin:0 0;">Securities: Money Market Fund</span>
<svg class="a" style="left:180.00px;top:482.56px" width="7.6" height="7.6" viewBox="0 0 8 8"><circle cx="4" cy="4" r="3.95" fill="#0f6a3a"/><path d="M2.0 4.0 L3.4 5.4 L6.1 2.6" fill="none" stroke="#fff" stroke-width="1.3"/></svg>
<span class="t succ" style="left:189.40px;top:482.97px;font-size:6.9px;transform:scaleX(0.91);transform-origin:0 0;">Successful</span>
<span class="t " style="left:290.30px;top:482.57px;font-size:6.9px;transform:scaleX(0.93);transform-origin:0 0;">Sep 13, 2023, 8:39:15 ...</span>
<span class="t " style="left:537.50px;top:482.57px;font-size:6.9px;transform:scaleX(0.91);transform-origin:0 0;">DEUBA</span>
<span class="t " style="left:836.20px;top:482.57px;font-size:6.9px;transform:scaleX(0.91);transform-origin:0 0;">32763</span>
<svg class="a" style="left:936.6px;top:483.96px" width="5" height="6" viewBox="0 0 5 6"><path d="M1.2 0.8 L3.7 3 L1.2 5.2" fill="none" stroke="#3a3f44" stroke-width="1.15"/></svg>
<div class="cb" style="left:25.1px;top:494.08px"></div>
<span class="t " style="left:40.90px;top:494.09px;font-size:6.9px;transform:scaleX(0.91);transform-origin:0 0;">1010</span>
<span class="t " style="left:76.90px;top:494.09px;font-size:6.9px;transform:scaleX(0.91);transform-origin:0 0;">FX Forward</span>
<svg class="a" style="left:180.00px;top:494.08px" width="7.6" height="7.6" viewBox="0 0 8 8"><circle cx="4" cy="4" r="3.95" fill="#a50d22"/><path d="M2.5 2.5 L5.5 5.5 M5.5 2.5 L2.5 5.5" fill="none" stroke="#fff" stroke-width="1.2"/></svg>
<span class="t err" style="left:189.40px;top:494.49px;font-size:6.9px;transform:scaleX(0.91);transform-origin:0 0;">Technical Error</span>
<span class="t " style="right:688.40px;top:494.09px;font-size:6.9px;transform:scaleX(0.91);transform-origin:100% 0;">Sep 29, 2023</span>
<span class="t " style="left:290.30px;top:494.09px;font-size:6.9px;transform:scaleX(0.93);transform-origin:0 0;">Sep 13, 2023, 3:37:28 ...</span>
<span class="t " style="left:370.50px;top:494.09px;font-size:6.9px;transform:scaleX(0.91);transform-origin:0 0;">EUR/USD</span>
<span class="t " style="right:525.50px;top:494.09px;font-size:6.9px;transform:scaleX(0.91);transform-origin:100% 0;">400,000.00</span>
<span class="t " style="left:456.00px;top:494.09px;font-size:6.9px;transform:scaleX(0.84);transform-origin:0 0;">USD</span>
<span class="t " style="left:475.40px;top:494.09px;font-size:6.9px;transform:scaleX(0.93);transform-origin:0 0;">540,000.0...</span>
<span class="t " style="left:517.90px;top:494.09px;font-size:6.9px;transform:scaleX(0.84);transform-origin:0 0;">EUR</span>
<span class="t " style="left:537.50px;top:494.09px;font-size:6.9px;transform:scaleX(0.91);transform-origin:0 0;">Citi</span>
<span class="t " style="left:591.50px;top:494.09px;font-size:6.9px;transform:scaleX(0.91);transform-origin:0 0;">Buy</span>
<span class="t " style="right:268.00px;top:494.09px;font-size:6.9px;transform:scaleX(0.91);transform-origin:100% 0;">1.35000000000000</span>
<span class="t " style="left:710.70px;top:494.09px;font-size:6.9px;transform:scaleX(0.93);transform-origin:0 0;">0.000000000000...</span>
<span class="t " style="left:773.80px;top:494.09px;font-size:6.9px;transform:scaleX(0.93);transform-origin:0 0;">1.350000000000...</span>
<span class="t " style="left:836.20px;top:494.09px;font-size:6.9px;transform:scaleX(0.91);transform-origin:0 0;">STM-0000000...</span>
<svg class="a" style="left:936.6px;top:495.48px" width="5" height="6" viewBox="0 0 5 6"><path d="M1.2 0.8 L3.7 3 L1.2 5.2" fill="none" stroke="#3a3f44" stroke-width="1.15"/></svg>
<div class="cb" style="left:25.1px;top:505.60px"></div>
<span class="t " style="left:40.90px;top:505.61px;font-size:6.9px;transform:scaleX(0.91);transform-origin:0 0;">1710</span>
<span class="t " style="left:76.90px;top:505.61px;font-size:6.9px;transform:scaleX(0.91);transform-origin:0 0;">FX Forward</span>
<svg class="a" style="left:180.00px;top:505.60px" width="7.6" height="7.6" viewBox="0 0 8 8"><circle cx="4" cy="4" r="3.95" fill="#0f6a3a"/><path d="M2.0 4.0 L3.4 5.4 L6.1 2.6" fill="none" stroke="#fff" stroke-width="1.3"/></svg>
<span class="t succ" style="left:189.40px;top:506.01px;font-size:6.9px;transform:scaleX(0.91);transform-origin:0 0;">Successful</span>
<span class="t " style="right:688.40px;top:505.61px;font-size:6.9px;transform:scaleX(0.91);transform-origin:100% 0;">Sep 29, 2023</span>
<span class="t " style="left:290.30px;top:505.61px;font-size:6.9px;transform:scaleX(0.93);transform-origin:0 0;">Sep 13, 2023, 2:59:50 ...</span>
<span class="t " style="left:370.50px;top:505.61px;font-size:6.9px;transform:scaleX(0.91);transform-origin:0 0;">EUR/USD</span>
<span class="t " style="right:525.50px;top:505.61px;font-size:6.9px;transform:scaleX(0.91);transform-origin:100% 0;">19,080.00</span>
<span class="t " style="left:456.00px;top:505.61px;font-size:6.9px;transform:scaleX(0.84);transform-origin:0 0;">EUR</span>
<span class="t " style="right:463.70px;top:505.61px;font-size:6.9px;transform:scaleX(0.91);transform-origin:100% 0;">20,501.88</span>
<span class="t " style="left:517.90px;top:505.61px;font-size:6.9px;transform:scaleX(0.84);transform-origin:0 0;">USD</span>
<span class="t " style="left:537.50px;top:505.61px;font-size:6.9px;transform:scaleX(0.91);transform-origin:0 0;">SEB</span>
<span class="t " style="left:591.50px;top:505.61px;font-size:6.9px;transform:scaleX(0.91);transform-origin:0 0;">Buy</span>
<span class="t " style="right:268.00px;top:505.61px;font-size:6.9px;transform:scaleX(0.91);transform-origin:100% 0;">1.07388000000000</span>
<span class="t " style="left:710.70px;top:505.61px;font-size:6.9px;transform:scaleX(0.93);transform-origin:0 0;">0.000682000000...</span>
<span class="t " style="left:773.80px;top:505.61px;font-size:6.9px;transform:scaleX(0.93);transform-origin:0 0;">1.074522000000...</span>
<span class="t " style="left:836.20px;top:505.61px;font-size:6.9px;transform:scaleX(0.91);transform-origin:0 0;">262812947</span>
<span class="t " style="left:889.30px;top:505.61px;font-size:6.9px;transform:scaleX(0.91);transform-origin:0 0;">97</span>
<svg class="a" style="left:936.6px;top:507.00px" width="5" height="6" viewBox="0 0 5 6"><path d="M1.2 0.8 L3.7 3 L1.2 5.2" fill="none" stroke="#3a3f44" stroke-width="1.15"/></svg>
<div class="cb" style="left:25.1px;top:517.12px"></div>
<span class="t " style="left:40.90px;top:517.13px;font-size:6.9px;transform:scaleX(0.91);transform-origin:0 0;">1010</span>
<span class="t " style="left:76.90px;top:517.13px;font-size:6.9px;transform:scaleX(0.91);transform-origin:0 0;">FX Spot</span>
<svg class="a" style="left:180.00px;top:517.12px" width="7.6" height="7.6" viewBox="0 0 8 8"><circle cx="4" cy="4" r="3.95" fill="#0f6a3a"/><path d="M2.0 4.0 L3.4 5.4 L6.1 2.6" fill="none" stroke="#fff" stroke-width="1.3"/></svg>
<span class="t succ" style="left:189.40px;top:517.53px;font-size:6.9px;transform:scaleX(0.91);transform-origin:0 0;">Successful</span>
<span class="t " style="right:688.40px;top:517.13px;font-size:6.9px;transform:scaleX(0.91);transform-origin:100% 0;">Sep 15, 2023</span>
<span class="t " style="left:290.30px;top:517.13px;font-size:6.9px;transform:scaleX(0.93);transform-origin:0 0;">Sep 13, 2023, 2:40:18 ...</span>
<span class="t " style="left:370.50px;top:517.13px;font-size:6.9px;transform:scaleX(0.91);transform-origin:0 0;">USD/EUR</span>
<span class="t " style="left:410.80px;top:517.13px;font-size:6.9px;transform:scaleX(0.93);transform-origin:0 0;">5,000,000....</span>
<span class="t " style="left:456.00px;top:517.13px;font-size:6.9px;transform:scaleX(0.84);transform-origin:0 0;">USD</span>
<span class="t " style="left:475.40px;top:517.13px;font-size:6.9px;transform:scaleX(0.93);transform-origin:0 0;">4,653,350....</span>
<span class="t " style="left:517.90px;top:517.13px;font-size:6.9px;transform:scaleX(0.84);transform-origin:0 0;">EUR</span>
<span class="t " style="left:537.50px;top:517.13px;font-size:6.9px;transform:scaleX(0.91);transform-origin:0 0;">Citi</span>
<span class="t " style="left:591.50px;top:517.13px;font-size:6.9px;transform:scaleX(0.91);transform-origin:0 0;">Buy</span>
<span class="t " style="right:268.00px;top:517.13px;font-size:6.9px;transform:scaleX(0.91);transform-origin:100% 0;">0.93067000000000</span>
<span class="t " style="left:710.70px;top:517.13px;font-size:6.9px;transform:scaleX(0.93);transform-origin:0 0;">0.000000000000...</span>
<span class="t " style="left:773.80px;top:517.13px;font-size:6.9px;transform:scaleX(0.93);transform-origin:0 0;">0.930670000000...</span>
<span class="t " style="left:836.20px;top:517.13px;font-size:6.9px;transform:scaleX(0.91);transform-origin:0 0;">262812932</span>
<svg class="a" style="left:936.6px;top:518.52px" width="5" height="6" viewBox="0 0 5 6"><path d="M1.2 0.8 L3.7 3 L1.2 5.2" fill="none" stroke="#3a3f44" stroke-width="1.15"/></svg>
<div class="a" style="left:18.9px;top:158.10px;width:3.1px;height:126.72px;background:#0f6f3c"></div>
<div class="a" style="left:18.9px;top:284.82px;width:3.1px;height:11.52px;background:#a8001a"></div>
<div class="a" style="left:18.9px;top:296.34px;width:3.1px;height:138.24px;background:#0f6f3c"></div>
<div class="a" style="left:18.9px;top:434.58px;width:3.1px;height:11.52px;background:#a8001a"></div>
<div class="a" style="left:18.9px;top:446.10px;width:3.1px;height:46.08px;background:#0f6f3c"></div>
<div class="a" style="left:18.9px;top:492.18px;width:3.1px;height:11.52px;background:#a8001a"></div>
<div class="a" style="left:18.9px;top:503.70px;width:3.1px;height:23.04px;background:#0f6f3c"></div>
<div class="a" style="left:18.9px;top:169.32px;width:3.1px;height:0.6px;background:rgba(255,255,255,0.45)"></div>
<div class="a" style="left:18.9px;top:180.84px;width:3.1px;height:0.6px;background:rgba(255,255,255,0.45)"></div>
<div class="a" style="left:18.9px;top:192.36px;width:3.1px;height:0.6px;background:rgba(255,255,255,0.45)"></div>
<div class="a" style="left:18.9px;top:203.88px;width:3.1px;height:0.6px;background:rgba(255,255,255,0.45)"></div>
<div class="a" style="left:18.9px;top:215.40px;width:3.1px;height:0.6px;background:rgba(255,255,255,0.45)"></div>
<div class="a" style="left:18.9px;top:226.92px;width:3.1px;height:0.6px;background:rgba(255,255,255,0.45)"></div>
<div class="a" style="left:18.9px;top:238.44px;width:3.1px;height:0.6px;background:rgba(255,255,255,0.45)"></div>
<div class="a" style="left:18.9px;top:249.96px;width:3.1px;height:0.6px;background:rgba(255,255,255,0.45)"></div>
<div class="a" style="left:18.9px;top:261.48px;width:3.1px;height:0.6px;background:rgba(255,255,255,0.45)"></div>
<div class="a" style="left:18.9px;top:273.00px;width:3.1px;height:0.6px;background:rgba(255,255,255,0.45)"></div>
<div class="a" style="left:18.9px;top:284.52px;width:3.1px;height:0.6px;background:rgba(255,255,255,0.45)"></div>
<div class="a" style="left:18.9px;top:296.04px;width:3.1px;height:0.6px;background:rgba(255,255,255,0.45)"></div>
<div class="a" style="left:18.9px;top:307.56px;width:3.1px;height:0.6px;background:rgba(255,255,255,0.45)"></div>
<div class="a" style="left:18.9px;top:319.08px;width:3.1px;height:0.6px;background:rgba(255,255,255,0.45)"></div>
<div class="a" style="left:18.9px;top:330.60px;width:3.1px;height:0.6px;background:rgba(255,255,255,0.45)"></div>
<div class="a" style="left:18.9px;top:342.12px;width:3.1px;height:0.6px;background:rgba(255,255,255,0.45)"></div>
<div class="a" style="left:18.9px;top:353.64px;width:3.1px;height:0.6px;background:rgba(255,255,255,0.45)"></div>
<div class="a" style="left:18.9px;top:365.16px;width:3.1px;height:0.6px;background:rgba(255,255,255,0.45)"></div>
<div class="a" style="left:18.9px;top:376.68px;width:3.1px;height:0.6px;background:rgba(255,255,255,0.45)"></div>
<div class="a" style="left:18.9px;top:388.20px;width:3.1px;height:0.6px;background:rgba(255,255,255,0.45)"></div>
<div class="a" style="left:18.9px;top:399.72px;width:3.1px;height:0.6px;background:rgba(255,255,255,0.45)"></div>
<div class="a" style="left:18.9px;top:411.24px;width:3.1px;height:0.6px;background:rgba(255,255,255,0.45)"></div>
<div class="a" style="left:18.9px;top:422.76px;width:3.1px;height:0.6px;background:rgba(255,255,255,0.45)"></div>
<div class="a" style="left:18.9px;top:434.28px;width:3.1px;height:0.6px;background:rgba(255,255,255,0.45)"></div>
<div class="a" style="left:18.9px;top:445.80px;width:3.1px;height:0.6px;background:rgba(255,255,255,0.45)"></div>
<div class="a" style="left:18.9px;top:457.32px;width:3.1px;height:0.6px;background:rgba(255,255,255,0.45)"></div>
<div class="a" style="left:18.9px;top:468.84px;width:3.1px;height:0.6px;background:rgba(255,255,255,0.45)"></div>
<div class="a" style="left:18.9px;top:480.36px;width:3.1px;height:0.6px;background:rgba(255,255,255,0.45)"></div>
<div class="a" style="left:18.9px;top:491.88px;width:3.1px;height:0.6px;background:rgba(255,255,255,0.45)"></div>
<div class="a" style="left:18.9px;top:503.40px;width:3.1px;height:0.6px;background:rgba(255,255,255,0.45)"></div>
<div class="a" style="left:18.9px;top:514.92px;width:3.1px;height:0.6px;background:rgba(255,255,255,0.45)"></div>
<div class="a" style="left:948.2px;top:386px;width:5.7px;height:139.5px;background:#8c8c8c"></div>
<div class="a" style="left:18.5px;top:526.3px;width:18.5px;height:8.6px;background:#f3f3f3"></div>
<div class="a" style="left:37px;top:527.2px;width:373.4px;height:5.8px;background:#8c8c8c;border-radius:2px"></div>
</body></html>
